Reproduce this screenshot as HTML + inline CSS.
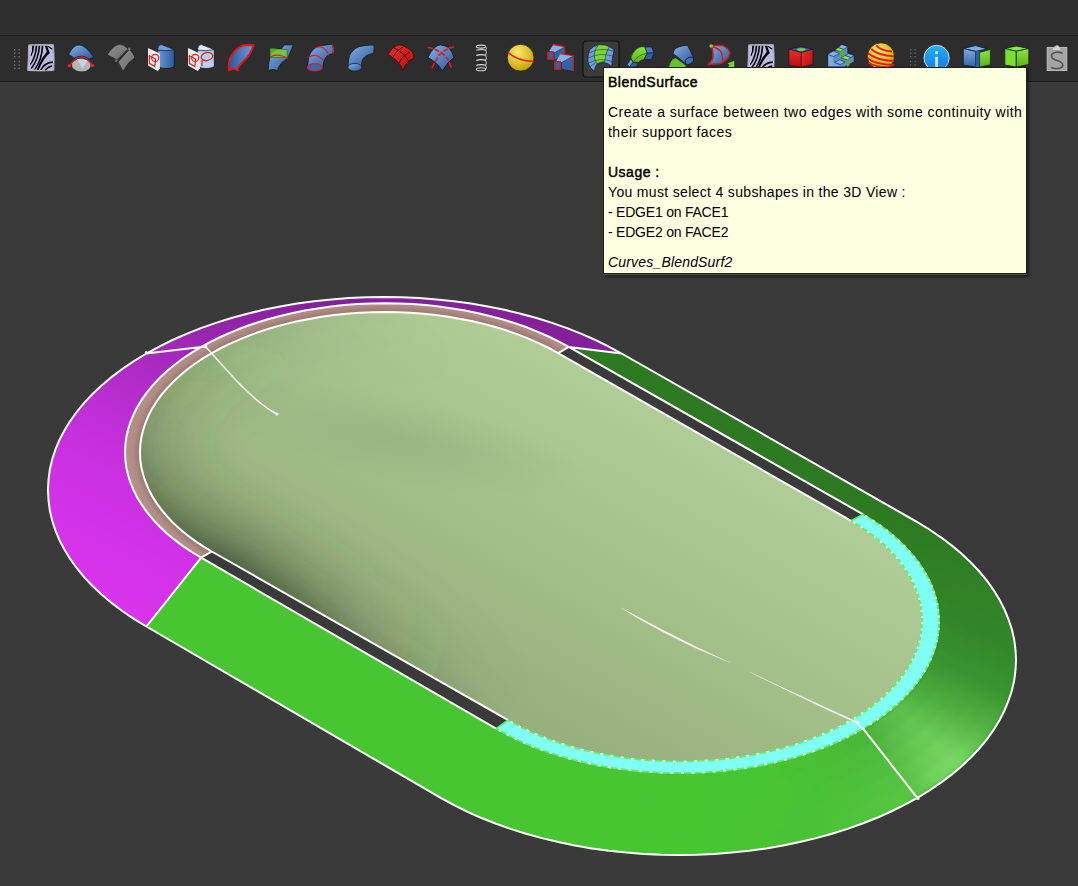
<!DOCTYPE html>
<html><head><meta charset="utf-8"><style>
html,body{margin:0;padding:0;}
body{width:1078px;height:886px;overflow:hidden;background:#3a3a3a;position:relative;font-family:"Liberation Sans",sans-serif;}
#top{position:absolute;left:0;top:0;width:1078px;height:35px;background:#2f2f2f;}
#tb{position:absolute;left:0;top:35px;width:1078px;height:47px;background:#2d2d2d;border-top:1px solid #1e1e1e;border-bottom:1px solid #1e1e1e;box-sizing:border-box;}
svg{position:absolute;left:0;top:0;}
#tip{position:absolute;left:603px;top:67px;width:424px;height:207px;box-sizing:border-box;background:#ffffe1;border:1px solid #1e1e1e;box-shadow:0 1px 0 #54544c,2px 3px 3px rgba(0,0,0,0.45);color:#000;font-size:14px;}
#tip div{position:absolute;left:4px;white-space:nowrap;line-height:17px;}
#tip .b{-webkit-text-stroke:0.45px #000;letter-spacing:0.5px;}
</style></head><body>
<div id="top"></div><div id="tb"></div>
<svg width="1078" height="886" viewBox="0 0 1078 886">
<defs>
 <linearGradient id="gmag" x1="300" y1="290" x2="130" y2="620" gradientUnits="userSpaceOnUse">
  <stop offset="0" stop-color="#84209a"/><stop offset="0.2" stop-color="#9426ac"/><stop offset="0.42" stop-color="#b22cc8"/><stop offset="0.62" stop-color="#c630de"/><stop offset="0.82" stop-color="#d232e8"/><stop offset="1" stop-color="#d834ec"/>
 </linearGradient>
 <radialGradient id="ghl" cx="915" cy="775" r="120" gradientUnits="userSpaceOnUse">
  <stop offset="0" stop-color="#74dc62"/><stop offset="1" stop-color="#74dc62" stop-opacity="0"/>
 </radialGradient>
 <linearGradient id="gdg" x1="900" y1="540" x2="900" y2="800" gradientUnits="userSpaceOnUse">
  <stop offset="0" stop-color="#2f7d23"/><stop offset="1" stop-color="#3fa02f"/>
 </linearGradient>
 <linearGradient id="gin" x1="700" y1="435" x2="528" y2="733" gradientUnits="userSpaceOnUse">
  <stop offset="0" stop-color="#b1cd97"/><stop offset="0.5" stop-color="#a4bf8a"/><stop offset="1" stop-color="#97ae7d"/>
 </linearGradient>
 <radialGradient id="rsh"><stop offset="0" stop-color="#3a4a2e" stop-opacity="0.75"/><stop offset="0.3" stop-color="#3a4a2e" stop-opacity="0.38"/><stop offset="0.65" stop-color="#3a4a2e" stop-opacity="0.1"/><stop offset="1" stop-color="#3a4a2e" stop-opacity="0"/></radialGradient>
 <radialGradient id="rsv" cx="225" cy="570" r="320" gradientUnits="userSpaceOnUse"><stop offset="0" stop-color="#34442a" stop-opacity="1"/><stop offset="0.25" stop-color="#34442a" stop-opacity="0.7"/><stop offset="0.5" stop-color="#34442a" stop-opacity="0.3"/><stop offset="0.75" stop-color="#34442a" stop-opacity="0.08"/><stop offset="1" stop-color="#34442a" stop-opacity="0"/></radialGradient>
 <radialGradient id="rsh2"><stop offset="0" stop-color="#4a5e3c" stop-opacity="0.2"/><stop offset="1" stop-color="#4a5e3c" stop-opacity="0"/></radialGradient>
 <radialGradient id="rsh3"><stop offset="0" stop-color="#6a8258" stop-opacity="0.18"/><stop offset="1" stop-color="#6a8258" stop-opacity="0"/></radialGradient>
 <filter id="blur3" x="-10%" y="-10%" width="120%" height="120%"><feGaussianBlur stdDeviation="2.5"/></filter>
 <filter id="blur22" x="-20%" y="-20%" width="140%" height="140%" filterUnits="objectBoundingBox"><feGaussianBlur stdDeviation="20"/></filter>
 <filter id="blur1" x="-5%" y="-5%" width="110%" height="110%"><feGaussianBlur stdDeviation="2.2"/></filter>
 <filter id="blur6" x="-20%" y="-20%" width="140%" height="140%"><feGaussianBlur stdDeviation="6"/></filter>
 <filter id="blur15" x="-50%" y="-50%" width="200%" height="200%"><feGaussianBlur stdDeviation="14"/></filter>
 <filter id="blur8" x="-50%" y="-50%" width="200%" height="200%"><feGaussianBlur stdDeviation="8"/></filter>
 <filter id="blur25" x="-50%" y="-50%" width="200%" height="200%"><feGaussianBlur stdDeviation="25"/></filter>
 <clipPath id="cin"><path d="M211.8,551.5L202.9,546.2L194.6,540.6L186.8,534.8L179.5,528.7L172.8,522.5L166.7,516.0L161.2,509.4L156.3,502.6L152.0,495.7L148.3,488.6L145.4,481.5L143.0,474.2L141.3,467.0L140.3,459.6L140.0,452.3L140.3,445.0L141.3,437.6L143.0,430.4L145.4,423.1L148.3,416.0L152.0,408.9L156.3,402.0L161.2,395.2L166.7,388.6L172.8,382.2L179.5,375.9L186.8,369.8L194.6,364.0L202.9,358.4L211.8,353.1L221.1,348.0L230.8,343.3L241.0,338.8L251.6,334.6L262.5,330.8L273.8,327.3L285.3,324.1L297.2,321.3L309.3,318.9L321.6,316.8L334.1,315.1L346.7,313.7L359.4,312.8L372.2,312.2L385.0,312.0L397.8,312.2L410.6,312.8L423.3,313.7L435.9,315.1L448.4,316.8L460.7,318.9L472.8,321.3L484.7,324.1L496.2,327.3L507.5,330.8L518.4,334.6L529.0,338.8L539.2,343.3L548.9,348.0L558.2,353.1L851.1,520.8L859.9,526.2L868.1,531.8L875.9,537.6L883.1,543.7L889.7,550.0L895.8,556.5L901.2,563.2L906.1,570.0L910.3,576.9L913.9,584.0L916.9,591.2L919.2,598.4L920.9,605.8L921.9,613.1L922.2,620.5L921.9,627.9L920.9,635.2L919.2,642.6L916.9,649.8L913.9,657.0L910.3,664.1L906.1,671.0L901.2,677.8L895.8,684.5L889.7,691.0L883.1,697.3L875.9,703.4L868.1,709.2L859.9,714.8L851.1,720.2L841.9,725.3L832.3,730.1L822.2,734.6L811.7,738.8L800.9,742.6L789.7,746.1L778.3,749.3L766.5,752.1L754.6,754.6L742.4,756.7L730.0,758.4L717.6,759.8L705.0,760.7L692.3,761.3L679.6,761.5L666.9,761.3L654.2,760.7L641.6,759.8L629.2,758.4L616.8,756.7L604.6,754.6L592.7,752.1L580.9,749.3L569.5,746.1L558.3,742.6L547.5,738.8L537.0,734.6L526.9,730.1L517.3,725.3L508.1,720.2Z"/></clipPath>
</defs>
<path d="M146.4,626.5L134.3,619.1L122.9,611.5L112.2,603.4L102.2,595.1L93.0,586.5L84.6,577.6L77.0,568.5L70.3,559.2L64.4,549.6L59.4,540.0L55.3,530.1L52.1,520.2L49.8,510.2L48.5,500.1L48.0,490.0L48.5,479.9L49.8,469.8L52.1,459.8L55.3,449.9L59.4,440.0L64.4,430.4L70.3,420.8L77.0,411.5L84.6,402.4L93.0,393.5L102.2,384.9L112.2,376.6L122.9,368.5L134.3,360.9L146.4,353.5L159.2,346.6L172.5,340.0L186.5,333.9L201.0,328.1L216.0,322.9L231.5,318.0L247.3,313.7L263.6,309.8L280.2,306.4L297.0,303.6L314.1,301.2L331.4,299.4L348.9,298.1L366.4,297.3L384.0,297.0L401.6,297.3L419.1,298.1L436.6,299.4L453.9,301.2L471.0,303.6L487.8,306.4L504.4,309.8L520.7,313.7L536.5,318.0L552.0,322.9L567.0,328.1L581.5,333.9L595.5,340.0L608.8,346.6L621.6,353.5L568.8,346.9L559.0,341.6L548.6,336.5L537.8,331.8L526.6,327.3L515.0,323.3L503.0,319.5L490.8,316.2L478.2,313.2L465.3,310.6L452.3,308.4L439.1,306.6L425.7,305.1L412.2,304.1L398.6,303.5L385.0,303.3L371.4,303.5L357.8,304.1L344.3,305.1L330.9,306.6L317.7,308.4L304.7,310.6L291.8,313.2L279.2,316.2L267.0,319.5L255.0,323.3L243.4,327.3L232.2,331.8L221.4,336.5L211.0,341.6L201.2,346.9L191.8,352.6L182.9,358.5L174.7,364.7L166.9,371.1L159.8,377.8L153.3,384.7L147.5,391.7L142.3,398.9L137.7,406.3L133.9,413.7L130.7,421.3L128.2,429.0L126.4,436.7L125.4,444.5L125.0,452.3L125.4,460.1L126.4,467.9L128.2,475.6L130.7,483.3L133.9,490.9L137.7,498.3L142.3,505.7L147.5,512.9L153.3,519.9L159.8,526.8L166.9,533.5L174.7,539.9L182.9,546.1L191.8,552.0L201.2,557.7Z" fill="url(#gmag)"/>
<path d="M621.6,353.5L917.3,522.1L929.4,529.5L940.9,537.3L951.6,545.4L961.6,553.8L970.9,562.5L979.3,571.5L986.9,580.7L993.6,590.1L999.5,599.7L1004.5,609.5L1008.6,619.5L1011.9,629.5L1014.2,639.6L1015.5,649.8L1016.0,660.0L1015.5,670.2L1014.2,680.4L1011.9,690.5L1008.6,700.5L1004.5,710.5L999.5,720.3L993.6,729.9L986.9,739.3L979.3,748.5L970.9,757.5L961.6,766.2L951.6,774.6L940.9,782.7L929.4,790.5L917.3,797.9L863.1,728.6L872.4,722.9L881.3,716.8L889.5,710.5L897.2,704.0L904.3,697.2L910.8,690.3L916.7,683.1L921.9,675.8L926.4,668.3L930.3,660.7L933.4,653.0L935.9,645.2L937.7,637.3L938.7,629.4L939.1,621.5L938.7,613.6L937.7,605.7L935.9,597.8L933.4,590.0L930.3,582.3L926.4,574.7L921.9,567.2L916.7,559.9L910.8,552.7L904.3,545.8L897.2,539.0L889.5,532.5L881.3,526.2L872.4,520.1L863.1,514.4L568.8,346.9Z" fill="#2e7a22"/>
<path d="M917.3,797.9L904.5,804.9L891.1,811.5L877.1,817.8L862.5,823.5L847.5,828.9L832.0,833.7L816.1,838.1L799.8,842.0L783.1,845.5L766.2,848.4L749.1,850.7L731.7,852.6L714.2,853.9L696.6,854.7L679.0,855.0L661.4,854.7L643.8,853.9L626.3,852.6L608.9,850.7L591.8,848.4L574.9,845.5L558.2,842.0L541.9,838.1L526.0,833.7L510.5,828.9L495.5,823.5L480.9,817.8L466.9,811.5L453.5,804.9L440.7,797.9L146.4,626.5L201.2,557.7L496.1,728.6L506.0,734.1L516.3,739.2L527.1,744.1L538.3,748.6L549.9,752.7L561.8,756.5L574.1,759.9L586.6,762.9L599.4,765.6L612.4,767.8L625.6,769.7L639.0,771.1L652.5,772.2L666.0,772.8L679.6,773.0L693.2,772.8L706.7,772.2L720.2,771.1L733.6,769.7L746.8,767.8L759.8,765.6L772.6,762.9L785.1,759.9L797.4,756.5L809.4,752.7L820.9,748.6L832.1,744.1L842.9,739.2L853.2,734.1L863.1,728.6Z" fill="#47c632"/>
<clipPath id="crr"><path d="M908.8,517.4L921.4,524.5L933.3,532.1L944.6,539.9L955.1,548.2L964.8,556.7L973.7,565.5L981.9,574.5L989.2,583.8L995.7,593.3L1001.3,603.0L1006.0,612.8L1009.8,622.8L1012.7,632.9L1014.7,643.0L1015.8,653.2L1015.9,663.4L1015.2,673.6L1013.5,683.8L1010.9,693.9L1007.4,703.9L1002.9,713.7L997.6,723.5L991.5,733.0L984.4,742.4L976.6,751.5L967.9,760.4L958.4,769.0L948.1,777.4L937.2,785.3L925.5,793.0L913.1,800.3L900.1,807.2L886.5,813.7L872.3,819.7L857.6,825.4L842.4,830.6L826.7,835.3L810.7,839.5L794.3,843.2L777.5,846.5L760.5,849.2L743.3,851.4L725.9,853.1L708.4,854.3L690.8,854.9L673.1,855.0L655.5,854.5L637.9,853.5L620.5,852.0L634.5,770.7L648.0,771.9L661.5,772.6L675.1,773.0L688.7,772.9L702.2,772.4L715.7,771.5L729.1,770.2L742.4,768.5L755.5,766.4L768.4,763.9L781.0,761.0L793.4,757.7L805.4,754.0L817.1,750.0L828.4,745.6L839.4,740.9L849.8,735.8L859.9,730.5L869.4,724.8L878.4,718.9L886.8,712.7L894.7,706.2L902.0,699.5L908.7,692.6L914.8,685.5L920.2,678.3L925.0,670.8L929.0,663.3L932.4,655.6L935.2,647.8L937.2,640.0L938.5,632.1L939.1,624.1L938.9,616.2L938.1,608.3L936.6,600.4L934.3,592.6L931.4,584.8L927.8,577.2L923.5,569.7L918.5,562.3L912.8,555.1L906.6,548.1L899.7,541.2L892.2,534.6L884.1,528.2L875.4,522.1L866.3,516.3L856.6,510.7Z"/></clipPath>
<g clip-path="url(#crr)"><g filter="url(#blur1)"><g><path d="M917.3,522.1L925.9,527.3L914.6,525.5L906.5,520.6Z" fill="#2e7a22" stroke="#2e7a22" stroke-width="0.7"/>
<path d="M923.5,525.8L931.8,531.0L920.3,529.1L912.3,524.1Z" fill="#2e7a22" stroke="#2e7a22" stroke-width="0.7"/>
<path d="M929.4,529.5L937.5,534.9L925.8,532.8L918.0,527.6Z" fill="#2e7b22" stroke="#2e7b22" stroke-width="0.7"/>
<path d="M935.3,533.4L943.1,538.9L931.1,536.6L923.6,531.3Z" fill="#2e7b23" stroke="#2e7b23" stroke-width="0.7"/>
<path d="M940.9,537.3L948.5,542.9L936.2,540.4L929.0,535.1Z" fill="#2e7b23" stroke="#2e7b23" stroke-width="0.7"/>
<path d="M946.4,541.3L953.7,547.0L941.2,544.4L934.2,538.9Z" fill="#2e7c23" stroke="#2e7c23" stroke-width="0.7"/>
<path d="M951.6,545.4L958.7,551.2L946.0,548.4L939.2,542.8Z" fill="#2e7c23" stroke="#2e7c23" stroke-width="0.7"/>
<path d="M956.7,549.6L963.5,555.5L950.6,552.5L944.1,546.8Z" fill="#2f7d24" stroke="#2f7d24" stroke-width="0.7"/>
<path d="M961.6,553.8L968.2,559.9L955.0,556.6L948.8,550.8Z" fill="#2f7d24" stroke="#2f7d24" stroke-width="0.7"/>
<path d="M966.3,558.1L972.6,564.3L959.2,560.8L953.2,555.0Z" fill="#2f7e24" stroke="#2f7e24" stroke-width="0.7"/>
<path d="M970.9,562.5L976.8,568.8L963.3,565.1L957.5,559.1Z" fill="#2f7e25" stroke="#2f7e25" stroke-width="0.7"/>
<path d="M975.2,567.0L980.9,573.3L967.1,569.5L961.7,563.4Z" fill="#2f7f25" stroke="#2f7f25" stroke-width="0.7"/>
<path d="M979.3,571.5L984.7,577.9L970.7,573.9L965.6,567.7Z" fill="#2f7f25" stroke="#2f7f25" stroke-width="0.7"/>
<path d="M983.2,576.1L988.3,582.6L974.2,578.3L969.3,572.1Z" fill="#2f7f26" stroke="#2f7f26" stroke-width="0.7"/>
<path d="M986.9,580.7L991.7,587.3L977.4,582.8L972.8,576.5Z" fill="#308026" stroke="#308026" stroke-width="0.7"/>
<path d="M990.3,585.4L994.9,592.0L980.5,587.4L976.1,581.0Z" fill="#308026" stroke="#308026" stroke-width="0.7"/>
<path d="M993.6,590.1L997.8,596.8L983.3,592.0L979.3,585.5Z" fill="#308126" stroke="#308126" stroke-width="0.7"/>
<path d="M996.7,594.9L1000.6,601.7L985.9,596.6L982.2,590.1Z" fill="#308127" stroke="#308127" stroke-width="0.7"/>
<path d="M999.5,599.7L1003.1,606.6L988.3,601.3L984.9,594.7Z" fill="#308227" stroke="#308227" stroke-width="0.7"/>
<path d="M1002.1,604.6L1005.4,611.5L990.5,606.0L987.4,599.4Z" fill="#308227" stroke="#308227" stroke-width="0.7"/>
<path d="M1004.5,609.5L1007.5,616.5L992.5,610.7L989.7,604.1Z" fill="#308328" stroke="#308328" stroke-width="0.7"/>
<path d="M1006.7,614.5L1009.4,621.5L994.3,615.5L991.7,608.8Z" fill="#318328" stroke="#318328" stroke-width="0.7"/>
<path d="M1008.6,619.5L1011.0,626.5L995.8,620.3L993.6,613.6Z" fill="#318328" stroke="#318328" stroke-width="0.7"/>
<path d="M1010.4,624.5L1012.4,631.5L997.2,625.1L995.2,618.3Z" fill="#318429" stroke="#318429" stroke-width="0.7"/>
<path d="M1011.9,629.5L1013.6,636.6L998.3,629.9L996.7,623.2Z" fill="#318429" stroke="#318429" stroke-width="0.7"/>
<path d="M1013.1,634.5L1014.5,641.6L999.2,634.8L997.9,628.0Z" fill="#318529" stroke="#318529" stroke-width="0.7"/>
<path d="M1014.2,639.6L1015.2,646.7L999.9,639.6L998.9,632.8Z" fill="#318529" stroke="#318529" stroke-width="0.7"/>
<path d="M1015.0,644.7L1015.7,651.8L1000.3,644.5L999.6,637.7Z" fill="#32872a" stroke="#32872a" stroke-width="0.7"/>
<path d="M1015.5,649.8L1016.0,656.9L1000.6,649.4L1000.2,642.5Z" fill="#33882b" stroke="#33882b" stroke-width="0.7"/>
<path d="M1015.9,654.9L1016.0,662.0L1000.6,654.3L1000.5,647.4Z" fill="#33892b" stroke="#33892b" stroke-width="0.7"/>
<path d="M1016.0,660.0L1015.8,667.1L1000.4,659.1L1000.6,652.3Z" fill="#348b2c" stroke="#348b2c" stroke-width="0.7"/>
<path d="M1015.9,665.1L1015.3,672.2L1000.0,664.0L1000.5,657.2Z" fill="#358c2c" stroke="#358c2c" stroke-width="0.7"/>
<path d="M1015.5,670.2L1014.7,677.3L999.3,668.9L1000.2,662.1Z" fill="#368e2d" stroke="#368e2d" stroke-width="0.7"/>
<path d="M1015.0,675.3L1013.8,682.4L998.5,673.7L999.6,666.9Z" fill="#368f2d" stroke="#368f2d" stroke-width="0.7"/>
<path d="M1014.2,680.4L1012.6,687.5L997.4,678.5L998.9,671.8Z" fill="#37912e" stroke="#37912e" stroke-width="0.7"/>
<path d="M1013.1,685.5L1011.3,692.5L996.1,683.4L997.9,676.6Z" fill="#38922e" stroke="#38922e" stroke-width="0.7"/>
<path d="M1011.9,690.5L1009.7,697.5L994.6,688.2L996.7,681.4Z" fill="#39942f" stroke="#39942f" stroke-width="0.7"/>
<path d="M1010.4,695.5L1007.9,702.5L992.9,692.9L995.2,686.3Z" fill="#3a9630" stroke="#3a9630" stroke-width="0.7"/>
<path d="M1008.6,700.5L1005.8,707.5L990.9,697.7L993.6,691.0Z" fill="#3d9a33" stroke="#3d9a33" stroke-width="0.7"/>
<path d="M1006.7,705.5L1003.6,712.4L988.8,702.4L991.7,695.8Z" fill="#419e35" stroke="#419e35" stroke-width="0.7"/>
<path d="M1004.5,710.5L1001.1,717.3L986.4,707.1L989.7,700.5Z" fill="#44a238" stroke="#44a238" stroke-width="0.7"/>
<path d="M1002.1,715.4L998.4,722.2L983.8,711.7L987.4,705.2Z" fill="#48a63b" stroke="#48a63b" stroke-width="0.7"/>
<path d="M999.5,720.3L995.5,727.0L981.0,716.3L984.9,709.9Z" fill="#4caa3e" stroke="#4caa3e" stroke-width="0.7"/>
<path d="M996.7,725.1L992.3,731.8L978.0,720.9L982.2,714.5Z" fill="#4fae41" stroke="#4fae41" stroke-width="0.7"/>
<path d="M993.6,729.9L989.0,736.5L974.8,725.4L979.3,719.1Z" fill="#53b244" stroke="#53b244" stroke-width="0.7"/>
<path d="M990.3,734.6L985.4,741.2L971.4,729.9L976.1,723.6Z" fill="#56b747" stroke="#56b747" stroke-width="0.7"/>
<path d="M986.9,739.3L981.6,745.8L967.8,734.3L972.8,728.1Z" fill="#5cbc4b" stroke="#5cbc4b" stroke-width="0.7"/>
<path d="M983.2,743.9L977.7,750.3L964.0,738.6L969.3,732.5Z" fill="#61c150" stroke="#61c150" stroke-width="0.7"/>
<path d="M979.3,748.5L973.5,754.8L960.0,742.9L965.6,736.9Z" fill="#66c654" stroke="#66c654" stroke-width="0.7"/>
<path d="M975.2,753.0L969.1,759.3L955.8,747.1L961.7,741.2Z" fill="#6bcb59" stroke="#6bcb59" stroke-width="0.7"/>
<path d="M970.9,757.5L964.5,763.6L951.5,751.3L957.5,745.4Z" fill="#70d05d" stroke="#70d05d" stroke-width="0.7"/>
<path d="M966.3,761.9L959.7,767.9L946.9,755.4L953.2,749.6Z" fill="#75d662" stroke="#75d662" stroke-width="0.7"/>
<path d="M961.6,766.2L954.7,772.1L942.2,759.4L948.8,753.8Z" fill="#77d864" stroke="#77d864" stroke-width="0.7"/>
<path d="M956.7,770.4L949.5,776.3L937.2,763.4L944.1,757.8Z" fill="#75d662" stroke="#75d662" stroke-width="0.7"/>
<path d="M951.6,774.6L944.2,780.3L932.1,767.3L939.2,761.8Z" fill="#73d560" stroke="#73d560" stroke-width="0.7"/>
<path d="M946.4,778.7L938.7,784.3L926.8,771.1L934.2,765.7Z" fill="#71d35e" stroke="#71d35e" stroke-width="0.7"/>
<path d="M940.9,782.7L933.0,788.2L921.4,774.8L929.0,769.5Z" fill="#6ed15a" stroke="#6ed15a" stroke-width="0.7"/>
<path d="M935.3,786.6L927.1,792.0L915.8,778.4L923.6,773.3Z" fill="#69cd56" stroke="#69cd56" stroke-width="0.7"/>
<path d="M929.4,790.5L921.0,795.7L910.0,781.9L918.0,777.0Z" fill="#63c951" stroke="#63c951" stroke-width="0.7"/>
<path d="M923.5,794.2L914.8,799.3L904.1,785.4L912.3,780.5Z" fill="#5ec54c" stroke="#5ec54c" stroke-width="0.7"/>
<path d="M917.3,797.9L908.3,802.9L897.9,788.8L906.5,784.0Z" fill="#57c644" stroke="#57c644" stroke-width="0.7"/>
<path d="M910.9,801.5L901.7,806.3L891.6,792.1L900.4,787.5Z" fill="#56c543" stroke="#56c543" stroke-width="0.7"/>
<path d="M904.4,805.0L895.0,809.7L885.2,795.3L894.1,790.8Z" fill="#55c542" stroke="#55c542" stroke-width="0.7"/>
<path d="M897.7,808.4L888.0,812.9L878.6,798.4L887.7,794.1Z" fill="#54c541" stroke="#54c541" stroke-width="0.7"/>
<path d="M890.8,811.7L881.0,816.1L871.8,801.4L881.2,797.2Z" fill="#53c53f" stroke="#53c53f" stroke-width="0.7"/>
<path d="M883.8,814.9L873.8,819.1L864.9,804.3L874.5,800.3Z" fill="#52c43e" stroke="#52c43e" stroke-width="0.7"/>
<path d="M876.7,817.9L866.4,822.1L857.9,807.1L867.7,803.2Z" fill="#51c43d" stroke="#51c43d" stroke-width="0.7"/>
<path d="M869.4,820.9L859.0,824.9L850.8,809.8L860.7,806.0Z" fill="#50c43c" stroke="#50c43c" stroke-width="0.7"/>
<path d="M861.9,823.8L851.4,827.6L843.6,812.4L853.7,808.8Z" fill="#4fc33b" stroke="#4fc33b" stroke-width="0.7"/>
<path d="M854.4,826.5L843.7,830.1L836.2,814.8L846.5,811.4Z" fill="#4ec33a" stroke="#4ec33a" stroke-width="0.7"/>
<path d="M846.7,829.1L835.8,832.6L828.7,817.2L839.1,813.9Z" fill="#4ec338" stroke="#4ec338" stroke-width="0.7"/>
<path d="M838.9,831.6L827.9,834.9L821.2,819.4L831.7,816.3Z" fill="#4dc237" stroke="#4dc237" stroke-width="0.7"/>
<path d="M831.0,834.0L819.8,837.2L813.5,821.6L824.2,818.6Z" fill="#4cc236" stroke="#4cc236" stroke-width="0.7"/>
<path d="M823.0,836.3L811.7,839.2L805.7,823.6L816.5,820.7Z" fill="#4bc235" stroke="#4bc235" stroke-width="0.7"/>
<path d="M814.9,838.4L803.5,841.2L797.9,825.4L808.8,822.8Z" fill="#4bc235" stroke="#4bc235" stroke-width="0.7"/>
<path d="M806.7,840.5L795.1,843.1L789.9,827.2L801.0,824.7Z" fill="#4ac235" stroke="#4ac235" stroke-width="0.7"/>
<path d="M798.4,842.3L786.7,844.8L781.9,828.8L793.1,826.5Z" fill="#4ac334" stroke="#4ac334" stroke-width="0.7"/>
<path d="M790.1,844.1L778.2,846.4L773.8,830.3L785.1,828.2Z" fill="#4ac334" stroke="#4ac334" stroke-width="0.7"/>
<path d="M781.6,845.7L769.7,847.8L765.6,831.7L777.0,829.8Z" fill="#49c334" stroke="#49c334" stroke-width="0.7"/>
<path d="M773.1,847.2L761.1,849.1L757.4,833.0L768.9,831.2Z" fill="#49c433" stroke="#49c433" stroke-width="0.7"/>
<path d="M764.5,848.6L752.4,850.3L749.2,834.1L760.7,832.5Z" fill="#49c433" stroke="#49c433" stroke-width="0.7"/>
<path d="M755.9,849.9L743.7,851.4L740.8,835.1L752.4,833.7Z" fill="#48c433" stroke="#48c433" stroke-width="0.7"/>
<path d="M747.1,851.0L734.9,852.3L732.5,836.0L744.1,834.8Z" fill="#48c433" stroke="#48c433" stroke-width="0.7"/>
<path d="M738.4,851.9L726.1,853.1L724.1,836.8L735.8,835.7Z" fill="#47c532" stroke="#47c532" stroke-width="0.7"/>
<path d="M729.6,852.8L717.3,853.7L715.6,837.4L727.4,836.5Z" fill="#47c532" stroke="#47c532" stroke-width="0.7"/>
<path d="M720.8,853.5L708.4,854.3L707.2,837.9L719.0,837.2Z" fill="#47c532" stroke="#47c532" stroke-width="0.7"/>
<path d="M711.9,854.1L699.5,854.6L698.7,838.3L710.5,837.7Z" fill="#47c632" stroke="#47c632" stroke-width="0.7"/>
<path d="M703.0,854.5L690.6,854.9L690.2,838.5L702.1,838.1Z" fill="#47c632" stroke="#47c632" stroke-width="0.7"/>
<path d="M694.1,854.8L681.7,855.0L681.7,838.6L693.6,838.4Z" fill="#47c632" stroke="#47c632" stroke-width="0.7"/>
<path d="M685.2,855.0L672.8,855.0L673.2,838.6L685.1,838.6Z" fill="#47c632" stroke="#47c632" stroke-width="0.7"/>
<path d="M676.3,855.0L663.9,854.8L664.7,838.4L676.6,838.6Z" fill="#47c632" stroke="#47c632" stroke-width="0.7"/>
<path d="M667.4,854.9L655.0,854.5L656.2,838.1L668.1,838.5Z" fill="#47c632" stroke="#47c632" stroke-width="0.7"/>
<path d="M658.5,854.6L646.1,854.1L647.7,837.7L659.6,838.3Z" fill="#47c632" stroke="#47c632" stroke-width="0.7"/>
<path d="M906.5,520.6L914.6,525.5L903.4,523.7L895.6,519.0Z" fill="#2e7a22" stroke="#2e7a22" stroke-width="0.7"/>
<path d="M912.3,524.1L920.3,529.1L908.8,527.2L901.2,522.3Z" fill="#2e7a22" stroke="#2e7a22" stroke-width="0.7"/>
<path d="M918.0,527.6L925.8,532.8L914.0,530.7L906.6,525.8Z" fill="#2e7b22" stroke="#2e7b22" stroke-width="0.7"/>
<path d="M923.6,531.3L931.1,536.6L919.1,534.3L911.9,529.3Z" fill="#2e7b23" stroke="#2e7b23" stroke-width="0.7"/>
<path d="M929.0,535.1L936.2,540.4L923.9,538.0L917.0,532.8Z" fill="#2e7b23" stroke="#2e7b23" stroke-width="0.7"/>
<path d="M934.2,538.9L941.2,544.4L928.7,541.7L922.0,536.5Z" fill="#2e7c23" stroke="#2e7c23" stroke-width="0.7"/>
<path d="M939.2,542.8L946.0,548.4L933.2,545.5L926.8,540.2Z" fill="#2e7c23" stroke="#2e7c23" stroke-width="0.7"/>
<path d="M944.1,546.8L950.6,552.5L937.6,549.4L931.4,544.0Z" fill="#2f7d24" stroke="#2f7d24" stroke-width="0.7"/>
<path d="M948.8,550.8L955.0,556.6L941.8,553.4L935.9,547.9Z" fill="#2f7d24" stroke="#2f7d24" stroke-width="0.7"/>
<path d="M953.2,555.0L959.2,560.8L945.8,557.4L940.1,551.8Z" fill="#2f7e24" stroke="#2f7e24" stroke-width="0.7"/>
<path d="M957.5,559.1L963.3,565.1L949.7,561.5L944.2,555.8Z" fill="#2f7e25" stroke="#2f7e25" stroke-width="0.7"/>
<path d="M961.7,563.4L967.1,569.5L953.3,565.6L948.2,559.9Z" fill="#2f7e25" stroke="#2f7e25" stroke-width="0.7"/>
<path d="M965.6,567.7L970.7,573.9L956.8,569.8L951.9,564.0Z" fill="#2f7f25" stroke="#2f7f25" stroke-width="0.7"/>
<path d="M969.3,572.1L974.2,578.3L960.1,574.1L955.4,568.1Z" fill="#2f7f26" stroke="#2f7f26" stroke-width="0.7"/>
<path d="M972.8,576.5L977.4,582.8L963.2,578.4L958.8,572.4Z" fill="#308026" stroke="#308026" stroke-width="0.7"/>
<path d="M976.1,581.0L980.5,587.4L966.0,582.7L961.9,576.6Z" fill="#308026" stroke="#308026" stroke-width="0.7"/>
<path d="M979.3,585.5L983.3,592.0L968.7,587.1L964.9,581.0Z" fill="#308126" stroke="#308126" stroke-width="0.7"/>
<path d="M982.2,590.1L985.9,596.6L971.2,591.5L967.7,585.3Z" fill="#308127" stroke="#308127" stroke-width="0.7"/>
<path d="M984.9,594.7L988.3,601.3L973.5,595.9L970.3,589.7Z" fill="#308127" stroke="#308127" stroke-width="0.7"/>
<path d="M987.4,599.4L990.5,606.0L975.6,600.4L972.6,594.2Z" fill="#308227" stroke="#308227" stroke-width="0.7"/>
<path d="M989.7,604.1L992.5,610.7L977.5,605.0L974.8,598.6Z" fill="#308228" stroke="#308228" stroke-width="0.7"/>
<path d="M991.7,608.8L994.3,615.5L979.2,609.5L976.8,603.1Z" fill="#308328" stroke="#308328" stroke-width="0.7"/>
<path d="M993.6,613.6L995.8,620.3L980.7,614.1L978.6,607.7Z" fill="#318328" stroke="#318328" stroke-width="0.7"/>
<path d="M995.2,618.3L997.2,625.1L982.0,618.7L980.1,612.2Z" fill="#318429" stroke="#318429" stroke-width="0.7"/>
<path d="M996.7,623.2L998.3,629.9L983.0,623.3L981.5,616.8Z" fill="#318429" stroke="#318429" stroke-width="0.7"/>
<path d="M997.9,628.0L999.2,634.8L983.9,627.9L982.6,621.4Z" fill="#318429" stroke="#318429" stroke-width="0.7"/>
<path d="M998.9,632.8L999.9,639.6L984.5,632.5L983.6,626.0Z" fill="#318529" stroke="#318529" stroke-width="0.7"/>
<path d="M999.6,637.7L1000.3,644.5L985.0,637.2L984.3,630.7Z" fill="#32862a" stroke="#32862a" stroke-width="0.7"/>
<path d="M1000.2,642.5L1000.6,649.4L985.2,641.8L984.8,635.3Z" fill="#32872a" stroke="#32872a" stroke-width="0.7"/>
<path d="M1000.5,647.4L1000.6,654.3L985.2,646.5L985.1,640.0Z" fill="#33892b" stroke="#33892b" stroke-width="0.7"/>
<path d="M1000.6,652.3L1000.4,659.1L985.0,651.1L985.2,644.6Z" fill="#348a2c" stroke="#348a2c" stroke-width="0.7"/>
<path d="M1000.5,657.2L1000.0,664.0L984.6,655.8L985.1,649.2Z" fill="#358c2c" stroke="#358c2c" stroke-width="0.7"/>
<path d="M1000.2,662.1L999.3,668.9L984.0,660.4L984.8,653.9Z" fill="#358d2d" stroke="#358d2d" stroke-width="0.7"/>
<path d="M999.6,666.9L998.5,673.7L983.2,665.0L984.3,658.5Z" fill="#368e2d" stroke="#368e2d" stroke-width="0.7"/>
<path d="M998.9,671.8L997.4,678.5L982.2,669.6L983.6,663.2Z" fill="#37902e" stroke="#37902e" stroke-width="0.7"/>
<path d="M997.9,676.6L996.1,683.4L981.0,674.2L982.6,667.8Z" fill="#37912e" stroke="#37912e" stroke-width="0.7"/>
<path d="M996.7,681.4L994.6,688.2L979.5,678.8L981.5,672.4Z" fill="#38932f" stroke="#38932f" stroke-width="0.7"/>
<path d="M995.2,686.3L992.9,692.9L977.9,683.3L980.1,677.0Z" fill="#399430" stroke="#399430" stroke-width="0.7"/>
<path d="M993.6,691.0L990.9,697.7L976.0,687.9L978.6,681.5Z" fill="#3c9832" stroke="#3c9832" stroke-width="0.7"/>
<path d="M991.7,695.8L988.8,702.4L974.0,692.4L976.8,686.1Z" fill="#3f9b34" stroke="#3f9b34" stroke-width="0.7"/>
<path d="M989.7,700.5L986.4,707.1L971.7,696.8L974.8,690.6Z" fill="#429f37" stroke="#429f37" stroke-width="0.7"/>
<path d="M987.4,705.2L983.8,711.7L969.3,701.2L972.6,695.0Z" fill="#46a339" stroke="#46a339" stroke-width="0.7"/>
<path d="M984.9,709.9L981.0,716.3L966.6,705.6L970.3,699.5Z" fill="#49a73c" stroke="#49a73c" stroke-width="0.7"/>
<path d="M982.2,714.5L978.0,720.9L963.8,710.0L967.7,703.9Z" fill="#4cab3e" stroke="#4cab3e" stroke-width="0.7"/>
<path d="M979.3,719.1L974.8,725.4L960.7,714.3L964.9,708.2Z" fill="#4faf41" stroke="#4faf41" stroke-width="0.7"/>
<path d="M976.1,723.6L971.4,729.9L957.5,718.5L961.9,712.6Z" fill="#53b343" stroke="#53b343" stroke-width="0.7"/>
<path d="M972.8,728.1L967.8,734.3L954.0,722.7L958.8,716.8Z" fill="#57b847" stroke="#57b847" stroke-width="0.7"/>
<path d="M969.3,732.5L964.0,738.6L950.4,726.9L955.4,721.1Z" fill="#5cbc4b" stroke="#5cbc4b" stroke-width="0.7"/>
<path d="M965.6,736.9L960.0,742.9L946.6,731.0L951.9,725.2Z" fill="#61c14f" stroke="#61c14f" stroke-width="0.7"/>
<path d="M961.7,741.2L955.8,747.1L942.6,735.0L948.2,729.3Z" fill="#65c654" stroke="#65c654" stroke-width="0.7"/>
<path d="M957.5,745.4L951.5,751.3L938.5,739.0L944.2,733.4Z" fill="#6acb58" stroke="#6acb58" stroke-width="0.7"/>
<path d="M953.2,749.6L946.9,755.4L934.1,742.9L940.1,737.4Z" fill="#6fcf5c" stroke="#6fcf5c" stroke-width="0.7"/>
<path d="M948.8,753.8L942.2,759.4L929.6,746.7L935.9,741.3Z" fill="#71d25e" stroke="#71d25e" stroke-width="0.7"/>
<path d="M944.1,757.8L937.2,763.4L924.9,750.5L931.4,745.2Z" fill="#6fd05c" stroke="#6fd05c" stroke-width="0.7"/>
<path d="M939.2,761.8L932.1,767.3L920.0,754.2L926.8,749.0Z" fill="#6dcf5a" stroke="#6dcf5a" stroke-width="0.7"/>
<path d="M934.2,765.7L926.8,771.1L915.0,757.8L922.0,752.7Z" fill="#6bcd58" stroke="#6bcd58" stroke-width="0.7"/>
<path d="M929.0,769.5L921.4,774.8L909.8,761.3L917.0,756.4Z" fill="#68cb55" stroke="#68cb55" stroke-width="0.7"/>
<path d="M923.6,773.3L915.8,778.4L904.5,764.8L911.9,759.9Z" fill="#64c751" stroke="#64c751" stroke-width="0.7"/>
<path d="M918.0,777.0L910.0,781.9L899.0,768.2L906.6,763.4Z" fill="#5fc44d" stroke="#5fc44d" stroke-width="0.7"/>
<path d="M912.3,780.5L904.1,785.4L893.3,771.5L901.2,766.9Z" fill="#5ac149" stroke="#5ac149" stroke-width="0.7"/>
<path d="M906.5,784.0L897.9,788.8L887.5,774.7L895.6,770.2Z" fill="#54c241" stroke="#54c241" stroke-width="0.7"/>
<path d="M900.4,787.5L891.6,792.1L881.5,777.9L889.8,773.5Z" fill="#53c240" stroke="#53c240" stroke-width="0.7"/>
<path d="M894.1,790.8L885.2,795.3L875.3,780.9L883.9,776.6Z" fill="#52c23f" stroke="#52c23f" stroke-width="0.7"/>
<path d="M887.7,794.1L878.6,798.4L869.1,783.9L877.8,779.7Z" fill="#52c23e" stroke="#52c23e" stroke-width="0.7"/>
<path d="M881.2,797.2L871.8,801.4L862.6,786.8L871.6,782.7Z" fill="#51c23e" stroke="#51c23e" stroke-width="0.7"/>
<path d="M874.5,800.3L864.9,804.3L856.1,789.5L865.2,785.6Z" fill="#50c23d" stroke="#50c23d" stroke-width="0.7"/>
<path d="M867.7,803.2L857.9,807.1L849.4,792.2L858.7,788.4Z" fill="#4fc23b" stroke="#4fc23b" stroke-width="0.7"/>
<path d="M860.7,806.0L850.8,809.8L842.7,794.8L852.1,791.2Z" fill="#4ec23a" stroke="#4ec23a" stroke-width="0.7"/>
<path d="M853.7,808.8L843.6,812.4L835.8,797.2L845.4,793.8Z" fill="#4ec239" stroke="#4ec239" stroke-width="0.7"/>
<path d="M846.5,811.4L836.2,814.8L828.8,799.6L838.5,796.2Z" fill="#4dc238" stroke="#4dc238" stroke-width="0.7"/>
<path d="M839.1,813.9L828.7,817.2L821.6,801.8L831.5,798.6Z" fill="#4cc237" stroke="#4cc237" stroke-width="0.7"/>
<path d="M831.7,816.3L821.2,819.4L814.4,803.9L824.5,800.9Z" fill="#4bc236" stroke="#4bc236" stroke-width="0.7"/>
<path d="M824.2,818.6L813.5,821.6L807.1,805.9L817.3,803.1Z" fill="#4bc235" stroke="#4bc235" stroke-width="0.7"/>
<path d="M816.5,820.7L805.7,823.6L799.7,807.9L810.0,805.2Z" fill="#4ac235" stroke="#4ac235" stroke-width="0.7"/>
<path d="M808.8,822.8L797.9,825.4L792.2,809.6L802.7,807.1Z" fill="#4ac234" stroke="#4ac234" stroke-width="0.7"/>
<path d="M801.0,824.7L789.9,827.2L784.7,811.3L795.2,808.9Z" fill="#49c334" stroke="#49c334" stroke-width="0.7"/>
<path d="M793.1,826.5L781.9,828.8L777.1,812.9L787.7,810.7Z" fill="#49c334" stroke="#49c334" stroke-width="0.7"/>
<path d="M785.1,828.2L773.8,830.3L769.4,814.3L780.1,812.3Z" fill="#49c433" stroke="#49c433" stroke-width="0.7"/>
<path d="M777.0,829.8L765.6,831.7L761.6,815.6L772.4,813.8Z" fill="#49c433" stroke="#49c433" stroke-width="0.7"/>
<path d="M768.9,831.2L757.4,833.0L753.8,816.9L764.7,815.1Z" fill="#48c433" stroke="#48c433" stroke-width="0.7"/>
<path d="M760.7,832.5L749.2,834.1L745.9,817.9L756.9,816.4Z" fill="#48c433" stroke="#48c433" stroke-width="0.7"/>
<path d="M752.4,833.7L740.8,835.1L738.0,818.9L749.0,817.5Z" fill="#48c433" stroke="#48c433" stroke-width="0.7"/>
<path d="M744.1,834.8L732.5,836.0L730.0,819.7L741.1,818.5Z" fill="#48c532" stroke="#48c532" stroke-width="0.7"/>
<path d="M735.8,835.7L724.1,836.8L722.0,820.5L733.2,819.4Z" fill="#47c532" stroke="#47c532" stroke-width="0.7"/>
<path d="M727.4,836.5L715.6,837.4L714.0,821.1L725.2,820.2Z" fill="#47c532" stroke="#47c532" stroke-width="0.7"/>
<path d="M719.0,837.2L707.2,837.9L705.9,821.5L717.2,820.8Z" fill="#47c532" stroke="#47c532" stroke-width="0.7"/>
<path d="M710.5,837.7L698.7,838.3L697.9,821.9L709.1,821.4Z" fill="#47c632" stroke="#47c632" stroke-width="0.7"/>
<path d="M702.1,838.1L690.2,838.5L689.8,822.1L701.1,821.7Z" fill="#47c632" stroke="#47c632" stroke-width="0.7"/>
<path d="M693.6,838.4L681.7,838.6L681.7,822.2L693.0,822.0Z" fill="#47c632" stroke="#47c632" stroke-width="0.7"/>
<path d="M685.1,838.6L673.2,838.6L673.6,822.2L684.9,822.2Z" fill="#47c632" stroke="#47c632" stroke-width="0.7"/>
<path d="M676.6,838.6L664.7,838.4L665.5,822.0L676.8,822.2Z" fill="#47c632" stroke="#47c632" stroke-width="0.7"/>
<path d="M668.1,838.5L656.2,838.1L657.4,821.7L668.7,822.1Z" fill="#47c632" stroke="#47c632" stroke-width="0.7"/>
<path d="M659.6,838.3L647.7,837.7L649.4,821.4L660.6,821.9Z" fill="#47c632" stroke="#47c632" stroke-width="0.7"/>
<path d="M895.6,519.0L903.4,523.7L892.2,521.9L884.8,517.5Z" fill="#2e7a22" stroke="#2e7a22" stroke-width="0.7"/>
<path d="M901.2,522.3L908.8,527.2L897.3,525.2L890.1,520.6Z" fill="#2e7a22" stroke="#2e7a22" stroke-width="0.7"/>
<path d="M906.6,525.8L914.0,530.7L902.2,528.6L895.2,523.9Z" fill="#2e7b22" stroke="#2e7b22" stroke-width="0.7"/>
<path d="M911.9,529.3L919.1,534.3L907.0,532.0L900.3,527.2Z" fill="#2e7b23" stroke="#2e7b23" stroke-width="0.7"/>
<path d="M917.0,532.8L923.9,538.0L911.7,535.5L905.1,530.6Z" fill="#2e7b23" stroke="#2e7b23" stroke-width="0.7"/>
<path d="M922.0,536.5L928.7,541.7L916.2,539.1L909.8,534.1Z" fill="#2e7c23" stroke="#2e7c23" stroke-width="0.7"/>
<path d="M926.8,540.2L933.2,545.5L920.5,542.7L914.4,537.6Z" fill="#2e7c23" stroke="#2e7c23" stroke-width="0.7"/>
<path d="M931.4,544.0L937.6,549.4L924.6,546.4L918.8,541.2Z" fill="#2e7d24" stroke="#2e7d24" stroke-width="0.7"/>
<path d="M935.9,547.9L941.8,553.4L928.6,550.2L923.0,544.9Z" fill="#2f7d24" stroke="#2f7d24" stroke-width="0.7"/>
<path d="M940.1,551.8L945.8,557.4L932.4,554.0L927.1,548.6Z" fill="#2f7d24" stroke="#2f7d24" stroke-width="0.7"/>
<path d="M944.2,555.8L949.7,561.5L936.1,557.9L930.9,552.5Z" fill="#2f7e25" stroke="#2f7e25" stroke-width="0.7"/>
<path d="M948.2,559.9L953.3,565.6L939.6,561.8L934.7,556.3Z" fill="#2f7e25" stroke="#2f7e25" stroke-width="0.7"/>
<path d="M951.9,564.0L956.8,569.8L942.9,565.8L938.2,560.2Z" fill="#2f7f25" stroke="#2f7f25" stroke-width="0.7"/>
<path d="M955.4,568.1L960.1,574.1L946.0,569.8L941.6,564.2Z" fill="#2f7f26" stroke="#2f7f26" stroke-width="0.7"/>
<path d="M958.8,572.4L963.2,578.4L948.9,573.9L944.7,568.2Z" fill="#2f7f26" stroke="#2f7f26" stroke-width="0.7"/>
<path d="M961.9,576.6L966.0,582.7L951.6,578.0L947.7,572.3Z" fill="#308026" stroke="#308026" stroke-width="0.7"/>
<path d="M964.9,581.0L968.7,587.1L954.2,582.2L950.6,576.4Z" fill="#308026" stroke="#308026" stroke-width="0.7"/>
<path d="M967.7,585.3L971.2,591.5L956.6,586.4L953.2,580.5Z" fill="#308127" stroke="#308127" stroke-width="0.7"/>
<path d="M970.3,589.7L973.5,595.9L958.7,590.6L955.6,584.7Z" fill="#308127" stroke="#308127" stroke-width="0.7"/>
<path d="M972.6,594.2L975.6,600.4L960.7,594.9L957.9,588.9Z" fill="#308227" stroke="#308227" stroke-width="0.7"/>
<path d="M974.8,598.6L977.5,605.0L962.5,599.2L960.0,593.2Z" fill="#308228" stroke="#308228" stroke-width="0.7"/>
<path d="M976.8,603.1L979.2,609.5L964.1,603.5L961.8,597.5Z" fill="#308228" stroke="#308228" stroke-width="0.7"/>
<path d="M978.6,607.7L980.7,614.1L965.5,607.9L963.5,601.8Z" fill="#308328" stroke="#308328" stroke-width="0.7"/>
<path d="M980.1,612.2L982.0,618.7L966.7,612.2L965.0,606.1Z" fill="#318329" stroke="#318329" stroke-width="0.7"/>
<path d="M981.5,616.8L983.0,623.3L967.8,616.6L966.3,610.5Z" fill="#318429" stroke="#318429" stroke-width="0.7"/>
<path d="M982.6,621.4L983.9,627.9L968.6,621.0L967.4,614.9Z" fill="#318429" stroke="#318429" stroke-width="0.7"/>
<path d="M983.6,626.0L984.5,632.5L969.2,625.4L968.3,619.2Z" fill="#318429" stroke="#318429" stroke-width="0.7"/>
<path d="M984.3,630.7L985.0,637.2L969.6,629.8L969.0,623.6Z" fill="#32862a" stroke="#32862a" stroke-width="0.7"/>
<path d="M984.8,635.3L985.2,641.8L969.8,634.2L969.5,628.1Z" fill="#32872a" stroke="#32872a" stroke-width="0.7"/>
<path d="M985.1,640.0L985.2,646.5L969.8,638.7L969.8,632.5Z" fill="#33882b" stroke="#33882b" stroke-width="0.7"/>
<path d="M985.2,644.6L985.0,651.1L969.7,643.1L969.9,636.9Z" fill="#348a2c" stroke="#348a2c" stroke-width="0.7"/>
<path d="M985.1,649.2L984.6,655.8L969.3,647.5L969.8,641.3Z" fill="#348b2c" stroke="#348b2c" stroke-width="0.7"/>
<path d="M984.8,653.9L984.0,660.4L968.7,651.9L969.5,645.7Z" fill="#358c2d" stroke="#358c2d" stroke-width="0.7"/>
<path d="M984.3,658.5L983.2,665.0L967.9,656.3L969.0,650.2Z" fill="#368e2d" stroke="#368e2d" stroke-width="0.7"/>
<path d="M983.6,663.2L982.2,669.6L967.0,660.7L968.3,654.6Z" fill="#368f2e" stroke="#368f2e" stroke-width="0.7"/>
<path d="M982.6,667.8L981.0,674.2L965.8,665.1L967.4,658.9Z" fill="#37902e" stroke="#37902e" stroke-width="0.7"/>
<path d="M981.5,672.4L979.5,678.8L964.4,669.4L966.3,663.3Z" fill="#38922f" stroke="#38922f" stroke-width="0.7"/>
<path d="M980.1,677.0L977.9,683.3L962.9,673.7L965.0,667.7Z" fill="#38932f" stroke="#38932f" stroke-width="0.7"/>
<path d="M978.6,681.5L976.0,687.9L961.1,678.0L963.5,672.0Z" fill="#3b9631" stroke="#3b9631" stroke-width="0.7"/>
<path d="M976.8,686.1L974.0,692.4L959.2,682.3L961.8,676.3Z" fill="#3d9933" stroke="#3d9933" stroke-width="0.7"/>
<path d="M974.8,690.6L971.7,696.8L957.0,686.6L960.0,680.6Z" fill="#409d35" stroke="#409d35" stroke-width="0.7"/>
<path d="M972.6,695.0L969.3,701.2L954.7,690.8L957.9,684.9Z" fill="#43a138" stroke="#43a138" stroke-width="0.7"/>
<path d="M970.3,699.5L966.6,705.6L952.2,694.9L955.6,689.1Z" fill="#46a43a" stroke="#46a43a" stroke-width="0.7"/>
<path d="M967.7,703.9L963.8,710.0L949.5,699.1L953.2,693.3Z" fill="#49a83c" stroke="#49a83c" stroke-width="0.7"/>
<path d="M964.9,708.2L960.7,714.3L946.6,703.2L950.6,697.4Z" fill="#4cab3e" stroke="#4cab3e" stroke-width="0.7"/>
<path d="M961.9,712.6L957.5,718.5L943.5,707.2L947.7,701.5Z" fill="#4faf40" stroke="#4faf40" stroke-width="0.7"/>
<path d="M958.8,716.8L954.0,722.7L940.2,711.2L944.7,705.6Z" fill="#52b343" stroke="#52b343" stroke-width="0.7"/>
<path d="M955.4,721.1L950.4,726.9L936.8,715.2L941.6,709.6Z" fill="#57b847" stroke="#57b847" stroke-width="0.7"/>
<path d="M951.9,725.2L946.6,731.0L933.2,719.0L938.2,713.6Z" fill="#5bbc4b" stroke="#5bbc4b" stroke-width="0.7"/>
<path d="M948.2,729.3L942.6,735.0L929.4,722.9L934.7,717.5Z" fill="#5fc04e" stroke="#5fc04e" stroke-width="0.7"/>
<path d="M944.2,733.4L938.5,739.0L925.4,726.7L930.9,721.3Z" fill="#64c552" stroke="#64c552" stroke-width="0.7"/>
<path d="M940.1,737.4L934.1,742.9L921.3,730.4L927.1,725.2Z" fill="#68c956" stroke="#68c956" stroke-width="0.7"/>
<path d="M935.9,741.3L929.6,746.7L917.0,734.0L923.0,728.9Z" fill="#6bcc58" stroke="#6bcc58" stroke-width="0.7"/>
<path d="M931.4,745.2L924.9,750.5L912.6,737.6L918.8,732.6Z" fill="#69cb56" stroke="#69cb56" stroke-width="0.7"/>
<path d="M926.8,749.0L920.0,754.2L908.0,741.1L914.4,736.2Z" fill="#67c955" stroke="#67c955" stroke-width="0.7"/>
<path d="M922.0,752.7L915.0,757.8L903.2,744.6L909.8,739.7Z" fill="#65c753" stroke="#65c753" stroke-width="0.7"/>
<path d="M917.0,756.4L909.8,761.3L898.3,747.9L905.1,743.2Z" fill="#62c550" stroke="#62c550" stroke-width="0.7"/>
<path d="M911.9,759.9L904.5,764.8L893.2,751.2L900.3,746.6Z" fill="#5ec24d" stroke="#5ec24d" stroke-width="0.7"/>
<path d="M906.6,763.4L899.0,768.2L888.0,754.4L895.2,749.9Z" fill="#5abf49" stroke="#5abf49" stroke-width="0.7"/>
<path d="M901.2,766.9L893.3,771.5L882.6,757.6L890.1,753.2Z" fill="#56bc45" stroke="#56bc45" stroke-width="0.7"/>
<path d="M895.6,770.2L887.5,774.7L877.1,760.7L884.8,756.3Z" fill="#51bf3f" stroke="#51bf3f" stroke-width="0.7"/>
<path d="M889.8,773.5L881.5,777.9L871.4,763.7L879.3,759.4Z" fill="#50bf3e" stroke="#50bf3e" stroke-width="0.7"/>
<path d="M883.9,776.6L875.3,780.9L865.5,766.6L873.6,762.5Z" fill="#50bf3d" stroke="#50bf3d" stroke-width="0.7"/>
<path d="M877.8,779.7L869.1,783.9L859.6,769.4L867.8,765.4Z" fill="#4fbf3c" stroke="#4fbf3c" stroke-width="0.7"/>
<path d="M871.6,782.7L862.6,786.8L853.5,772.1L861.9,768.3Z" fill="#4ec03c" stroke="#4ec03c" stroke-width="0.7"/>
<path d="M865.2,785.6L856.1,789.5L847.3,774.7L855.9,771.0Z" fill="#4ec03b" stroke="#4ec03b" stroke-width="0.7"/>
<path d="M858.7,788.4L849.4,792.2L840.9,777.3L849.7,773.7Z" fill="#4dc03a" stroke="#4dc03a" stroke-width="0.7"/>
<path d="M852.1,791.2L842.7,794.8L834.5,779.7L843.5,776.3Z" fill="#4cc039" stroke="#4cc039" stroke-width="0.7"/>
<path d="M845.4,793.8L835.8,797.2L828.0,782.0L837.1,778.7Z" fill="#4cc138" stroke="#4cc138" stroke-width="0.7"/>
<path d="M838.5,796.2L828.8,799.6L821.3,784.3L830.6,781.1Z" fill="#4bc137" stroke="#4bc137" stroke-width="0.7"/>
<path d="M831.5,798.6L821.6,801.8L814.5,786.4L823.9,783.4Z" fill="#4bc136" stroke="#4bc136" stroke-width="0.7"/>
<path d="M824.5,800.9L814.4,803.9L807.7,788.4L817.2,785.6Z" fill="#4ac136" stroke="#4ac136" stroke-width="0.7"/>
<path d="M817.3,803.1L807.1,805.9L800.8,790.3L810.4,787.6Z" fill="#4ac235" stroke="#4ac235" stroke-width="0.7"/>
<path d="M810.0,805.2L799.7,807.9L793.7,792.2L803.5,789.6Z" fill="#49c234" stroke="#49c234" stroke-width="0.7"/>
<path d="M802.7,807.1L792.2,809.6L786.6,793.9L796.5,791.5Z" fill="#49c334" stroke="#49c334" stroke-width="0.7"/>
<path d="M795.2,808.9L784.7,811.3L779.5,795.5L789.5,793.2Z" fill="#49c333" stroke="#49c333" stroke-width="0.7"/>
<path d="M787.7,810.7L777.1,812.9L772.2,796.9L782.3,794.8Z" fill="#48c433" stroke="#48c433" stroke-width="0.7"/>
<path d="M780.1,812.3L769.4,814.3L764.9,798.3L775.1,796.4Z" fill="#48c433" stroke="#48c433" stroke-width="0.7"/>
<path d="M772.4,813.8L761.6,815.6L757.5,799.6L767.8,797.8Z" fill="#48c433" stroke="#48c433" stroke-width="0.7"/>
<path d="M764.7,815.1L753.8,816.9L750.1,800.7L760.5,799.1Z" fill="#48c433" stroke="#48c433" stroke-width="0.7"/>
<path d="M756.9,816.4L745.9,817.9L742.6,801.7L753.1,800.3Z" fill="#48c532" stroke="#48c532" stroke-width="0.7"/>
<path d="M749.0,817.5L738.0,818.9L735.1,802.7L745.6,801.3Z" fill="#47c532" stroke="#47c532" stroke-width="0.7"/>
<path d="M741.1,818.5L730.0,819.7L727.6,803.5L738.1,802.3Z" fill="#47c532" stroke="#47c532" stroke-width="0.7"/>
<path d="M733.2,819.4L722.0,820.5L720.0,804.1L730.6,803.2Z" fill="#47c532" stroke="#47c532" stroke-width="0.7"/>
<path d="M725.2,820.2L714.0,821.1L712.4,804.7L723.0,803.9Z" fill="#47c532" stroke="#47c532" stroke-width="0.7"/>
<path d="M717.2,820.8L705.9,821.5L704.7,805.2L715.4,804.5Z" fill="#47c532" stroke="#47c532" stroke-width="0.7"/>
<path d="M709.1,821.4L697.9,821.9L697.0,805.5L707.7,805.0Z" fill="#47c632" stroke="#47c632" stroke-width="0.7"/>
<path d="M701.1,821.7L689.8,822.1L689.4,805.7L700.1,805.4Z" fill="#47c632" stroke="#47c632" stroke-width="0.7"/>
<path d="M693.0,822.0L681.7,822.2L681.7,805.8L692.4,805.6Z" fill="#47c632" stroke="#47c632" stroke-width="0.7"/>
<path d="M684.9,822.2L673.6,822.2L674.0,805.8L684.7,805.8Z" fill="#47c632" stroke="#47c632" stroke-width="0.7"/>
<path d="M676.8,822.2L665.5,822.0L666.3,805.6L677.1,805.8Z" fill="#47c632" stroke="#47c632" stroke-width="0.7"/>
<path d="M668.7,822.1L657.4,821.7L658.7,805.4L669.4,805.7Z" fill="#47c632" stroke="#47c632" stroke-width="0.7"/>
<path d="M660.6,821.9L649.4,821.4L651.0,805.0L661.7,805.5Z" fill="#47c632" stroke="#47c632" stroke-width="0.7"/>
<path d="M884.8,517.5L892.2,521.9L880.9,520.1L873.9,515.9Z" fill="#2e7a22" stroke="#2e7a22" stroke-width="0.7"/>
<path d="M890.1,520.6L897.3,525.2L885.8,523.3L879.0,518.9Z" fill="#2e7a22" stroke="#2e7a22" stroke-width="0.7"/>
<path d="M895.2,523.9L902.2,528.6L890.5,526.4L883.8,522.0Z" fill="#2e7a22" stroke="#2e7a22" stroke-width="0.7"/>
<path d="M900.3,527.2L907.0,532.0L895.0,529.7L888.6,525.2Z" fill="#2e7b23" stroke="#2e7b23" stroke-width="0.7"/>
<path d="M905.1,530.6L911.7,535.5L899.4,533.0L893.2,528.4Z" fill="#2e7b23" stroke="#2e7b23" stroke-width="0.7"/>
<path d="M909.8,534.1L916.2,539.1L903.6,536.4L897.7,531.7Z" fill="#2e7c23" stroke="#2e7c23" stroke-width="0.7"/>
<path d="M914.4,537.6L920.5,542.7L907.7,539.8L902.0,535.0Z" fill="#2e7c23" stroke="#2e7c23" stroke-width="0.7"/>
<path d="M918.8,541.2L924.6,546.4L911.7,543.4L906.1,538.5Z" fill="#2e7c24" stroke="#2e7c24" stroke-width="0.7"/>
<path d="M923.0,544.9L928.6,550.2L915.4,546.9L910.1,541.9Z" fill="#2f7d24" stroke="#2f7d24" stroke-width="0.7"/>
<path d="M927.1,548.6L932.4,554.0L919.1,550.6L914.0,545.5Z" fill="#2f7d24" stroke="#2f7d24" stroke-width="0.7"/>
<path d="M930.9,552.5L936.1,557.9L922.5,554.2L917.6,549.1Z" fill="#2f7e25" stroke="#2f7e25" stroke-width="0.7"/>
<path d="M934.7,556.3L939.6,561.8L925.8,558.0L921.2,552.8Z" fill="#2f7e25" stroke="#2f7e25" stroke-width="0.7"/>
<path d="M938.2,560.2L942.9,565.8L928.9,561.8L924.5,556.5Z" fill="#2f7e25" stroke="#2f7e25" stroke-width="0.7"/>
<path d="M941.6,564.2L946.0,569.8L931.9,565.6L927.7,560.2Z" fill="#2f7f26" stroke="#2f7f26" stroke-width="0.7"/>
<path d="M944.7,568.2L948.9,573.9L934.6,569.4L930.7,564.0Z" fill="#2f7f26" stroke="#2f7f26" stroke-width="0.7"/>
<path d="M947.7,572.3L951.6,578.0L937.2,573.4L933.5,567.9Z" fill="#2f8026" stroke="#2f8026" stroke-width="0.7"/>
<path d="M950.6,576.4L954.2,582.2L939.7,577.3L936.2,571.8Z" fill="#308026" stroke="#308026" stroke-width="0.7"/>
<path d="M953.2,580.5L956.6,586.4L941.9,581.3L938.7,575.7Z" fill="#308027" stroke="#308027" stroke-width="0.7"/>
<path d="M955.6,584.7L958.7,590.6L944.0,585.3L941.0,579.7Z" fill="#308127" stroke="#308127" stroke-width="0.7"/>
<path d="M957.9,588.9L960.7,594.9L945.8,589.4L943.2,583.7Z" fill="#308127" stroke="#308127" stroke-width="0.7"/>
<path d="M960.0,593.2L962.5,599.2L947.5,593.4L945.1,587.7Z" fill="#308228" stroke="#308228" stroke-width="0.7"/>
<path d="M961.8,597.5L964.1,603.5L949.1,597.5L946.9,591.8Z" fill="#308228" stroke="#308228" stroke-width="0.7"/>
<path d="M963.5,601.8L965.5,607.9L950.4,601.7L948.5,595.9Z" fill="#308228" stroke="#308228" stroke-width="0.7"/>
<path d="M965.0,606.1L966.7,612.2L951.5,605.8L949.9,600.0Z" fill="#308329" stroke="#308329" stroke-width="0.7"/>
<path d="M966.3,610.5L967.8,616.6L952.5,610.0L951.1,604.1Z" fill="#318329" stroke="#318329" stroke-width="0.7"/>
<path d="M967.4,614.9L968.6,621.0L953.3,614.1L952.1,608.3Z" fill="#318429" stroke="#318429" stroke-width="0.7"/>
<path d="M968.3,619.2L969.2,625.4L953.8,618.3L953.0,612.5Z" fill="#318429" stroke="#318429" stroke-width="0.7"/>
<path d="M969.0,623.6L969.6,629.8L954.2,622.5L953.6,616.6Z" fill="#31852a" stroke="#31852a" stroke-width="0.7"/>
<path d="M969.5,628.1L969.8,634.2L954.4,626.7L954.1,620.8Z" fill="#32862a" stroke="#32862a" stroke-width="0.7"/>
<path d="M969.8,632.5L969.8,638.7L954.5,630.9L954.4,625.0Z" fill="#33882b" stroke="#33882b" stroke-width="0.7"/>
<path d="M969.9,636.9L969.7,643.1L954.3,635.1L954.5,629.2Z" fill="#33892b" stroke="#33892b" stroke-width="0.7"/>
<path d="M969.8,641.3L969.3,647.5L953.9,639.3L954.4,633.4Z" fill="#348a2c" stroke="#348a2c" stroke-width="0.7"/>
<path d="M969.5,645.7L968.7,651.9L953.4,643.4L954.1,637.6Z" fill="#348b2d" stroke="#348b2d" stroke-width="0.7"/>
<path d="M969.0,650.2L967.9,656.3L952.7,647.6L953.6,641.8Z" fill="#358d2d" stroke="#358d2d" stroke-width="0.7"/>
<path d="M968.3,654.6L967.0,660.7L951.7,651.8L953.0,645.9Z" fill="#368e2e" stroke="#368e2e" stroke-width="0.7"/>
<path d="M967.4,658.9L965.8,665.1L950.6,655.9L952.1,650.1Z" fill="#368f2e" stroke="#368f2e" stroke-width="0.7"/>
<path d="M966.3,663.3L964.4,669.4L949.3,660.0L951.1,654.3Z" fill="#37912f" stroke="#37912f" stroke-width="0.7"/>
<path d="M965.0,667.7L962.9,673.7L947.9,664.1L949.9,658.4Z" fill="#38922f" stroke="#38922f" stroke-width="0.7"/>
<path d="M963.5,672.0L961.1,678.0L946.2,668.2L948.5,662.5Z" fill="#399430" stroke="#399430" stroke-width="0.7"/>
<path d="M961.8,676.3L959.2,682.3L944.3,672.3L946.9,666.6Z" fill="#3c9732" stroke="#3c9732" stroke-width="0.7"/>
<path d="M960.0,680.6L957.0,686.6L942.3,676.3L945.1,670.7Z" fill="#3e9b34" stroke="#3e9b34" stroke-width="0.7"/>
<path d="M957.9,684.9L954.7,690.8L940.1,680.3L943.2,674.7Z" fill="#419e36" stroke="#419e36" stroke-width="0.7"/>
<path d="M955.6,689.1L952.2,694.9L937.7,684.3L941.0,678.7Z" fill="#43a138" stroke="#43a138" stroke-width="0.7"/>
<path d="M953.2,693.3L949.5,699.1L935.2,688.2L938.7,682.7Z" fill="#46a539" stroke="#46a539" stroke-width="0.7"/>
<path d="M950.6,697.4L946.6,703.2L932.4,692.1L936.2,686.6Z" fill="#48a83b" stroke="#48a83b" stroke-width="0.7"/>
<path d="M947.7,701.5L943.5,707.2L929.5,695.9L933.5,690.5Z" fill="#4bac3d" stroke="#4bac3d" stroke-width="0.7"/>
<path d="M944.7,705.6L940.2,711.2L926.4,699.7L930.7,694.4Z" fill="#4eaf3f" stroke="#4eaf3f" stroke-width="0.7"/>
<path d="M941.6,709.6L936.8,715.2L923.2,703.4L927.7,698.2Z" fill="#52b342" stroke="#52b342" stroke-width="0.7"/>
<path d="M938.2,713.6L933.2,719.0L919.8,707.1L924.5,701.9Z" fill="#56b746" stroke="#56b746" stroke-width="0.7"/>
<path d="M934.7,717.5L929.4,722.9L916.2,710.7L921.2,705.6Z" fill="#5abb49" stroke="#5abb49" stroke-width="0.7"/>
<path d="M930.9,721.3L925.4,726.7L912.4,714.3L917.6,709.3Z" fill="#5ebf4c" stroke="#5ebf4c" stroke-width="0.7"/>
<path d="M927.1,725.2L921.3,730.4L908.5,717.9L914.0,712.9Z" fill="#62c350" stroke="#62c350" stroke-width="0.7"/>
<path d="M923.0,728.9L917.0,734.0L904.5,721.3L910.1,716.5Z" fill="#64c652" stroke="#64c652" stroke-width="0.7"/>
<path d="M918.8,732.6L912.6,737.6L900.3,724.7L906.1,719.9Z" fill="#63c551" stroke="#63c551" stroke-width="0.7"/>
<path d="M914.4,736.2L908.0,741.1L895.9,728.0L902.0,723.4Z" fill="#61c34f" stroke="#61c34f" stroke-width="0.7"/>
<path d="M909.8,739.7L903.2,744.6L891.4,731.3L897.7,726.7Z" fill="#5fc14d" stroke="#5fc14d" stroke-width="0.7"/>
<path d="M905.1,743.2L898.3,747.9L886.7,734.5L893.2,730.0Z" fill="#5dbf4b" stroke="#5dbf4b" stroke-width="0.7"/>
<path d="M900.3,746.6L893.2,751.2L881.9,737.6L888.6,733.2Z" fill="#59bc48" stroke="#59bc48" stroke-width="0.7"/>
<path d="M895.2,749.9L888.0,754.4L877.0,740.7L883.8,736.4Z" fill="#56ba45" stroke="#56ba45" stroke-width="0.7"/>
<path d="M890.1,753.2L882.6,757.6L871.9,743.7L879.0,739.5Z" fill="#53b742" stroke="#53b742" stroke-width="0.7"/>
<path d="M884.8,756.3L877.1,760.7L866.6,746.6L873.9,742.5Z" fill="#4ebb3d" stroke="#4ebb3d" stroke-width="0.7"/>
<path d="M879.3,759.4L871.4,763.7L861.2,749.4L868.7,745.4Z" fill="#4dbc3c" stroke="#4dbc3c" stroke-width="0.7"/>
<path d="M873.6,762.5L865.5,766.6L855.7,752.2L863.4,748.3Z" fill="#4dbc3b" stroke="#4dbc3b" stroke-width="0.7"/>
<path d="M867.8,765.4L859.6,769.4L850.1,754.9L857.9,751.1Z" fill="#4cbd3a" stroke="#4cbd3a" stroke-width="0.7"/>
<path d="M861.9,768.3L853.5,772.1L844.3,757.4L852.3,753.8Z" fill="#4cbd3a" stroke="#4cbd3a" stroke-width="0.7"/>
<path d="M855.9,771.0L847.3,774.7L838.4,759.9L846.6,756.4Z" fill="#4bbe39" stroke="#4bbe39" stroke-width="0.7"/>
<path d="M849.7,773.7L840.9,777.3L832.4,762.3L840.8,759.0Z" fill="#4bbe38" stroke="#4bbe38" stroke-width="0.7"/>
<path d="M843.5,776.3L834.5,779.7L826.3,764.6L834.8,761.4Z" fill="#4abf37" stroke="#4abf37" stroke-width="0.7"/>
<path d="M837.1,778.7L828.0,782.0L820.1,766.9L828.8,763.7Z" fill="#4abf37" stroke="#4abf37" stroke-width="0.7"/>
<path d="M830.6,781.1L821.3,784.3L813.8,769.0L822.6,766.0Z" fill="#4ac036" stroke="#4ac036" stroke-width="0.7"/>
<path d="M823.9,783.4L814.5,786.4L807.5,771.0L816.3,768.1Z" fill="#49c035" stroke="#49c035" stroke-width="0.7"/>
<path d="M817.2,785.6L807.7,788.4L801.0,772.9L810.0,770.2Z" fill="#49c135" stroke="#49c135" stroke-width="0.7"/>
<path d="M810.4,787.6L800.8,790.3L794.4,774.7L803.5,772.2Z" fill="#48c234" stroke="#48c234" stroke-width="0.7"/>
<path d="M803.5,789.6L793.7,792.2L787.8,776.5L797.0,774.0Z" fill="#48c234" stroke="#48c234" stroke-width="0.7"/>
<path d="M796.5,791.5L786.6,793.9L781.0,778.1L790.4,775.8Z" fill="#48c333" stroke="#48c333" stroke-width="0.7"/>
<path d="M789.5,793.2L779.5,795.5L774.2,779.6L783.7,777.4Z" fill="#48c433" stroke="#48c433" stroke-width="0.7"/>
<path d="M782.3,794.8L772.2,796.9L767.4,781.0L776.9,779.0Z" fill="#48c532" stroke="#48c532" stroke-width="0.7"/>
<path d="M775.1,796.4L764.9,798.3L760.5,782.3L770.1,780.5Z" fill="#48c532" stroke="#48c532" stroke-width="0.7"/>
<path d="M767.8,797.8L757.5,799.6L753.5,783.5L763.2,781.8Z" fill="#47c532" stroke="#47c532" stroke-width="0.7"/>
<path d="M760.5,799.1L750.1,800.7L746.5,784.6L756.3,783.0Z" fill="#47c532" stroke="#47c532" stroke-width="0.7"/>
<path d="M753.1,800.3L742.6,801.7L739.4,785.6L749.2,784.2Z" fill="#47c532" stroke="#47c532" stroke-width="0.7"/>
<path d="M745.6,801.3L735.1,802.7L732.3,786.4L742.2,785.2Z" fill="#47c532" stroke="#47c532" stroke-width="0.7"/>
<path d="M738.1,802.3L727.6,803.5L725.1,787.2L735.1,786.1Z" fill="#47c532" stroke="#47c532" stroke-width="0.7"/>
<path d="M730.6,803.2L720.0,804.1L717.9,787.8L727.9,786.9Z" fill="#47c532" stroke="#47c532" stroke-width="0.7"/>
<path d="M723.0,803.9L712.4,804.7L710.7,788.4L720.8,787.6Z" fill="#47c532" stroke="#47c532" stroke-width="0.7"/>
<path d="M715.4,804.5L704.7,805.2L703.5,788.8L713.6,788.2Z" fill="#47c532" stroke="#47c532" stroke-width="0.7"/>
<path d="M707.7,805.0L697.0,805.5L696.2,789.1L706.3,788.6Z" fill="#47c632" stroke="#47c632" stroke-width="0.7"/>
<path d="M700.1,805.4L689.4,805.7L689.0,789.3L699.1,789.0Z" fill="#47c632" stroke="#47c632" stroke-width="0.7"/>
<path d="M692.4,805.6L681.7,805.8L681.7,789.4L691.8,789.2Z" fill="#47c632" stroke="#47c632" stroke-width="0.7"/>
<path d="M684.7,805.8L674.0,805.8L674.4,789.4L684.6,789.4Z" fill="#47c632" stroke="#47c632" stroke-width="0.7"/>
<path d="M677.1,805.8L666.3,805.6L667.2,789.2L677.3,789.4Z" fill="#47c632" stroke="#47c632" stroke-width="0.7"/>
<path d="M669.4,805.7L658.7,805.4L659.9,789.0L670.0,789.3Z" fill="#47c632" stroke="#47c632" stroke-width="0.7"/>
<path d="M661.7,805.5L651.0,805.0L652.6,788.6L662.8,789.1Z" fill="#47c632" stroke="#47c632" stroke-width="0.7"/>
<path d="M873.9,515.9L880.9,520.1L869.7,518.4L863.1,514.4Z" fill="#2e7a22" stroke="#2e7a22" stroke-width="0.7"/>
<path d="M879.0,518.9L885.8,523.3L874.3,521.3L867.8,517.2Z" fill="#2e7a22" stroke="#2e7a22" stroke-width="0.7"/>
<path d="M883.8,522.0L890.5,526.4L878.7,524.3L872.4,520.1Z" fill="#2e7a22" stroke="#2e7a22" stroke-width="0.7"/>
<path d="M888.6,525.2L895.0,529.7L883.0,527.4L876.9,523.1Z" fill="#2e7b23" stroke="#2e7b23" stroke-width="0.7"/>
<path d="M893.2,528.4L899.4,533.0L887.1,530.5L881.3,526.2Z" fill="#2e7b23" stroke="#2e7b23" stroke-width="0.7"/>
<path d="M897.7,531.7L903.6,536.4L891.1,533.7L885.5,529.3Z" fill="#2e7c23" stroke="#2e7c23" stroke-width="0.7"/>
<path d="M902.0,535.0L907.7,539.8L895.0,537.0L889.5,532.5Z" fill="#2e7c23" stroke="#2e7c23" stroke-width="0.7"/>
<path d="M906.1,538.5L911.7,543.4L898.7,540.3L893.5,535.7Z" fill="#2e7c24" stroke="#2e7c24" stroke-width="0.7"/>
<path d="M910.1,541.9L915.4,546.9L902.3,543.7L897.2,539.0Z" fill="#2e7d24" stroke="#2e7d24" stroke-width="0.7"/>
<path d="M914.0,545.5L919.1,550.6L905.7,547.1L900.9,542.3Z" fill="#2f7d24" stroke="#2f7d24" stroke-width="0.7"/>
<path d="M917.6,549.1L922.5,554.2L908.9,550.6L904.3,545.8Z" fill="#2f7e25" stroke="#2f7e25" stroke-width="0.7"/>
<path d="M921.2,552.8L925.8,558.0L912.0,554.1L907.7,549.2Z" fill="#2f7e25" stroke="#2f7e25" stroke-width="0.7"/>
<path d="M924.5,556.5L928.9,561.8L915.0,557.7L910.8,552.7Z" fill="#2f7e25" stroke="#2f7e25" stroke-width="0.7"/>
<path d="M927.7,560.2L931.9,565.6L917.8,561.3L913.8,556.3Z" fill="#2f7f26" stroke="#2f7f26" stroke-width="0.7"/>
<path d="M930.7,564.0L934.6,569.4L920.4,565.0L916.7,559.9Z" fill="#2f7f26" stroke="#2f7f26" stroke-width="0.7"/>
<path d="M933.5,567.9L937.2,573.4L922.8,568.7L919.3,563.5Z" fill="#2f7f26" stroke="#2f7f26" stroke-width="0.7"/>
<path d="M936.2,571.8L939.7,577.3L925.1,572.4L921.9,567.2Z" fill="#2f8026" stroke="#2f8026" stroke-width="0.7"/>
<path d="M938.7,575.7L941.9,581.3L927.2,576.2L924.2,570.9Z" fill="#308027" stroke="#308027" stroke-width="0.7"/>
<path d="M941.0,579.7L944.0,585.3L929.2,580.0L926.4,574.7Z" fill="#308127" stroke="#308127" stroke-width="0.7"/>
<path d="M943.2,583.7L945.8,589.4L930.9,583.8L928.4,578.5Z" fill="#308127" stroke="#308127" stroke-width="0.7"/>
<path d="M945.1,587.7L947.5,593.4L932.6,587.7L930.3,582.3Z" fill="#308128" stroke="#308128" stroke-width="0.7"/>
<path d="M946.9,591.8L949.1,597.5L934.0,591.6L931.9,586.1Z" fill="#308228" stroke="#308228" stroke-width="0.7"/>
<path d="M948.5,595.9L950.4,601.7L935.2,595.5L933.4,590.0Z" fill="#308228" stroke="#308228" stroke-width="0.7"/>
<path d="M949.9,600.0L951.5,605.8L936.3,599.4L934.8,593.9Z" fill="#308229" stroke="#308229" stroke-width="0.7"/>
<path d="M951.1,604.1L952.5,610.0L937.2,603.3L935.9,597.8Z" fill="#308329" stroke="#308329" stroke-width="0.7"/>
<path d="M952.1,608.3L953.3,614.1L937.9,607.2L936.9,601.7Z" fill="#308329" stroke="#308329" stroke-width="0.7"/>
<path d="M953.0,612.5L953.8,618.3L938.5,611.2L937.7,605.7Z" fill="#318429" stroke="#318429" stroke-width="0.7"/>
<path d="M953.6,616.6L954.2,622.5L938.9,615.2L938.3,609.6Z" fill="#31852a" stroke="#31852a" stroke-width="0.7"/>
<path d="M954.1,620.8L954.4,626.7L939.1,619.1L938.7,613.6Z" fill="#32862a" stroke="#32862a" stroke-width="0.7"/>
<path d="M954.4,625.0L954.5,630.9L939.1,623.1L939.0,617.5Z" fill="#32872b" stroke="#32872b" stroke-width="0.7"/>
<path d="M954.5,629.2L954.3,635.1L938.9,627.1L939.1,621.5Z" fill="#33882b" stroke="#33882b" stroke-width="0.7"/>
<path d="M954.4,633.4L953.9,639.3L938.6,631.0L939.0,625.5Z" fill="#348a2c" stroke="#348a2c" stroke-width="0.7"/>
<path d="M954.1,637.6L953.4,643.4L938.1,635.0L938.7,629.4Z" fill="#348b2c" stroke="#348b2c" stroke-width="0.7"/>
<path d="M953.6,641.8L952.7,647.6L937.4,638.9L938.3,633.4Z" fill="#358c2d" stroke="#358c2d" stroke-width="0.7"/>
<path d="M953.0,645.9L951.7,651.8L936.5,642.8L937.7,637.3Z" fill="#358d2d" stroke="#358d2d" stroke-width="0.7"/>
<path d="M952.1,650.1L950.6,655.9L935.5,646.8L936.9,641.3Z" fill="#368e2e" stroke="#368e2e" stroke-width="0.7"/>
<path d="M951.1,654.3L949.3,660.0L934.2,650.7L935.9,645.2Z" fill="#37902e" stroke="#37902e" stroke-width="0.7"/>
<path d="M949.9,658.4L947.9,664.1L932.9,654.5L934.8,649.1Z" fill="#37912f" stroke="#37912f" stroke-width="0.7"/>
<path d="M948.5,662.5L946.2,668.2L931.3,658.4L933.4,653.0Z" fill="#389230" stroke="#389230" stroke-width="0.7"/>
<path d="M946.9,666.6L944.3,672.3L929.5,662.2L931.9,656.9Z" fill="#3a9531" stroke="#3a9531" stroke-width="0.7"/>
<path d="M945.1,670.7L942.3,676.3L927.6,666.0L930.3,660.7Z" fill="#3c9833" stroke="#3c9833" stroke-width="0.7"/>
<path d="M943.2,674.7L940.1,680.3L925.5,669.8L928.4,664.5Z" fill="#3e9b34" stroke="#3e9b34" stroke-width="0.7"/>
<path d="M941.0,678.7L937.7,684.3L923.3,673.6L926.4,668.3Z" fill="#419e35" stroke="#419e35" stroke-width="0.7"/>
<path d="M938.7,682.7L935.2,688.2L920.9,677.3L924.2,672.1Z" fill="#43a237" stroke="#43a237" stroke-width="0.7"/>
<path d="M936.2,686.6L932.4,692.1L918.3,680.9L921.9,675.8Z" fill="#45a538" stroke="#45a538" stroke-width="0.7"/>
<path d="M933.5,690.5L929.5,695.9L915.5,684.6L919.3,679.5Z" fill="#47a83a" stroke="#47a83a" stroke-width="0.7"/>
<path d="M930.7,694.4L926.4,699.7L912.6,688.2L916.7,683.1Z" fill="#49ab3b" stroke="#49ab3b" stroke-width="0.7"/>
<path d="M927.7,698.2L923.2,703.4L909.6,691.7L913.8,686.7Z" fill="#4daf3e" stroke="#4daf3e" stroke-width="0.7"/>
<path d="M924.5,701.9L919.8,707.1L906.3,695.2L910.8,690.3Z" fill="#50b241" stroke="#50b241" stroke-width="0.7"/>
<path d="M921.2,705.6L916.2,710.7L903.0,698.6L907.7,693.8Z" fill="#54b644" stroke="#54b644" stroke-width="0.7"/>
<path d="M917.6,709.3L912.4,714.3L899.4,702.0L904.3,697.2Z" fill="#57b947" stroke="#57b947" stroke-width="0.7"/>
<path d="M914.0,712.9L908.5,717.9L895.7,705.3L900.9,700.7Z" fill="#5bbd49" stroke="#5bbd49" stroke-width="0.7"/>
<path d="M910.1,716.5L904.5,721.3L891.9,708.6L897.2,704.0Z" fill="#5ec04c" stroke="#5ec04c" stroke-width="0.7"/>
<path d="M906.1,719.9L900.3,724.7L887.9,711.8L893.5,707.3Z" fill="#5dbf4b" stroke="#5dbf4b" stroke-width="0.7"/>
<path d="M902.0,723.4L895.9,728.0L883.8,715.0L889.5,710.5Z" fill="#5bbd4a" stroke="#5bbd4a" stroke-width="0.7"/>
<path d="M897.7,726.7L891.4,731.3L879.5,718.1L885.5,713.7Z" fill="#59bb48" stroke="#59bb48" stroke-width="0.7"/>
<path d="M893.2,730.0L886.7,734.5L875.1,721.1L881.3,716.8Z" fill="#57b946" stroke="#57b946" stroke-width="0.7"/>
<path d="M888.6,733.2L881.9,737.6L870.6,724.0L876.9,719.9Z" fill="#54b744" stroke="#54b744" stroke-width="0.7"/>
<path d="M883.8,736.4L877.0,740.7L866.0,726.9L872.4,722.9Z" fill="#51b541" stroke="#51b541" stroke-width="0.7"/>
<path d="M879.0,739.5L871.9,743.7L861.2,729.7L867.8,725.8Z" fill="#4fb33e" stroke="#4fb33e" stroke-width="0.7"/>
<path d="M873.9,742.5L866.6,746.6L856.2,732.5L863.1,728.6Z" fill="#4bb83a" stroke="#4bb83a" stroke-width="0.7"/>
<path d="M868.7,745.4L861.2,749.4L851.1,735.2L858.2,731.4Z" fill="#4bb83a" stroke="#4bb83a" stroke-width="0.7"/>
<path d="M863.4,748.3L855.7,752.2L845.9,737.8L853.1,734.1Z" fill="#4ab939" stroke="#4ab939" stroke-width="0.7"/>
<path d="M857.9,751.1L850.1,754.9L840.6,740.3L848.0,736.8Z" fill="#4aba38" stroke="#4aba38" stroke-width="0.7"/>
<path d="M852.3,753.8L844.3,757.4L835.1,742.8L842.7,739.3Z" fill="#49bb38" stroke="#49bb38" stroke-width="0.7"/>
<path d="M846.6,756.4L838.4,759.9L829.6,745.1L837.3,741.8Z" fill="#49bc37" stroke="#49bc37" stroke-width="0.7"/>
<path d="M840.8,759.0L832.4,762.3L823.9,747.4L831.8,744.2Z" fill="#49bc36" stroke="#49bc36" stroke-width="0.7"/>
<path d="M834.8,761.4L826.3,764.6L818.2,749.6L826.2,746.5Z" fill="#48bd36" stroke="#48bd36" stroke-width="0.7"/>
<path d="M828.8,763.7L820.1,766.9L812.3,751.7L820.5,748.7Z" fill="#48be35" stroke="#48be35" stroke-width="0.7"/>
<path d="M822.6,766.0L813.8,769.0L806.4,753.7L814.7,750.9Z" fill="#48bf35" stroke="#48bf35" stroke-width="0.7"/>
<path d="M816.3,768.1L807.5,771.0L800.4,755.6L808.8,752.9Z" fill="#48c034" stroke="#48c034" stroke-width="0.7"/>
<path d="M810.0,770.2L801.0,772.9L794.2,757.4L802.8,754.9Z" fill="#48c134" stroke="#48c134" stroke-width="0.7"/>
<path d="M803.5,772.2L794.4,774.7L788.0,759.1L796.7,756.7Z" fill="#47c133" stroke="#47c133" stroke-width="0.7"/>
<path d="M797.0,774.0L787.8,776.5L781.8,760.8L790.5,758.5Z" fill="#47c233" stroke="#47c233" stroke-width="0.7"/>
<path d="M790.4,775.8L781.0,778.1L775.4,762.3L784.3,760.1Z" fill="#47c333" stroke="#47c333" stroke-width="0.7"/>
<path d="M783.7,777.4L774.2,779.6L769.0,763.7L778.0,761.7Z" fill="#47c432" stroke="#47c432" stroke-width="0.7"/>
<path d="M776.9,779.0L767.4,781.0L762.6,765.1L771.6,763.2Z" fill="#47c532" stroke="#47c532" stroke-width="0.7"/>
<path d="M770.1,780.5L760.5,782.3L756.0,766.3L765.1,764.5Z" fill="#47c532" stroke="#47c532" stroke-width="0.7"/>
<path d="M763.2,781.8L753.5,783.5L749.4,767.4L758.6,765.8Z" fill="#47c532" stroke="#47c532" stroke-width="0.7"/>
<path d="M756.3,783.0L746.5,784.6L742.8,768.4L752.1,767.0Z" fill="#47c532" stroke="#47c532" stroke-width="0.7"/>
<path d="M749.2,784.2L739.4,785.6L736.1,769.4L745.4,768.0Z" fill="#47c532" stroke="#47c532" stroke-width="0.7"/>
<path d="M742.2,785.2L732.3,786.4L729.4,770.2L738.8,769.0Z" fill="#47c532" stroke="#47c532" stroke-width="0.7"/>
<path d="M735.1,786.1L725.1,787.2L722.7,770.9L732.1,769.9Z" fill="#47c532" stroke="#47c532" stroke-width="0.7"/>
<path d="M727.9,786.9L717.9,787.8L715.9,771.5L725.3,770.6Z" fill="#47c532" stroke="#47c532" stroke-width="0.7"/>
<path d="M720.8,787.6L710.7,788.4L709.1,772.0L718.6,771.3Z" fill="#47c532" stroke="#47c532" stroke-width="0.7"/>
<path d="M713.6,788.2L703.5,788.8L702.2,772.4L711.8,771.8Z" fill="#47c532" stroke="#47c532" stroke-width="0.7"/>
<path d="M706.3,788.6L696.2,789.1L695.4,772.7L705.0,772.3Z" fill="#47c632" stroke="#47c632" stroke-width="0.7"/>
<path d="M699.1,789.0L689.0,789.3L688.5,772.9L698.1,772.6Z" fill="#47c632" stroke="#47c632" stroke-width="0.7"/>
<path d="M691.8,789.2L681.7,789.4L681.7,773.0L691.3,772.8Z" fill="#47c632" stroke="#47c632" stroke-width="0.7"/>
<path d="M684.6,789.4L674.4,789.4L674.8,773.0L684.4,773.0Z" fill="#47c632" stroke="#47c632" stroke-width="0.7"/>
<path d="M677.3,789.4L667.2,789.2L668.0,772.8L677.5,773.0Z" fill="#47c632" stroke="#47c632" stroke-width="0.7"/>
<path d="M670.0,789.3L659.9,789.0L661.1,772.6L670.7,772.9Z" fill="#47c632" stroke="#47c632" stroke-width="0.7"/>
<path d="M662.8,789.1L652.6,788.6L654.3,772.3L663.8,772.7Z" fill="#47c632" stroke="#47c632" stroke-width="0.7"/></g></g></g>
<path d="M201.2,557.7L191.8,552.0L182.9,546.1L174.7,539.9L166.9,533.5L159.8,526.8L153.3,519.9L147.5,512.9L142.3,505.7L137.7,498.3L133.9,490.9L130.7,483.3L128.2,475.6L126.4,467.9L125.4,460.1L125.0,452.3L125.4,444.5L126.4,436.7L128.2,429.0L130.7,421.3L133.9,413.7L137.7,406.3L142.3,398.9L147.5,391.7L153.3,384.7L159.8,377.8L166.9,371.1L174.7,364.7L182.9,358.5L191.8,352.6L201.2,346.9L211.0,341.6L221.4,336.5L232.2,331.8L243.4,327.3L255.0,323.3L267.0,319.5L279.2,316.2L291.8,313.2L304.7,310.6L317.7,308.4L330.9,306.6L344.3,305.1L357.8,304.1L371.4,303.5L385.0,303.3L398.6,303.5L412.2,304.1L425.7,305.1L439.1,306.6L452.3,308.4L465.3,310.6L478.2,313.2L490.8,316.2L503.0,319.5L515.0,323.3L526.6,327.3L537.8,331.8L548.6,336.5L559.0,341.6L568.8,346.9L558.2,353.1L548.9,348.0L539.2,343.3L529.0,338.8L518.4,334.6L507.5,330.8L496.2,327.3L484.7,324.1L472.8,321.3L460.7,318.9L448.4,316.8L435.9,315.1L423.3,313.7L410.6,312.8L397.8,312.2L385.0,312.0L372.2,312.2L359.4,312.8L346.7,313.7L334.1,315.1L321.6,316.8L309.3,318.9L297.2,321.3L285.3,324.1L273.8,327.3L262.5,330.8L251.6,334.6L241.0,338.8L230.8,343.3L221.1,348.0L211.8,353.1L202.9,358.4L194.6,364.0L186.8,369.8L179.5,375.9L172.8,382.2L166.7,388.6L161.2,395.2L156.3,402.0L152.0,408.9L148.3,416.0L145.4,423.1L143.0,430.4L141.3,437.6L140.3,445.0L140.0,452.3L140.3,459.6L141.3,467.0L143.0,474.2L145.4,481.5L148.3,488.6L152.0,495.7L156.3,502.6L161.2,509.4L166.7,516.0L172.8,522.5L179.5,528.7L186.8,534.8L194.6,540.6L202.9,546.2L211.8,551.5Z" fill="#b38f88"/>
<clipPath id="cbr"><path d="M201.2,557.7L191.8,552.0L182.9,546.1L174.7,539.9L166.9,533.5L159.8,526.8L153.3,519.9L147.5,512.9L142.3,505.7L137.7,498.3L133.9,490.9L130.7,483.3L128.2,475.6L126.4,467.9L125.4,460.1L125.0,452.3L125.4,444.5L126.4,436.7L128.2,429.0L130.7,421.3L133.9,413.7L137.7,406.3L142.3,398.9L147.5,391.7L153.3,384.7L159.8,377.8L166.9,371.1L174.7,364.7L182.9,358.5L191.8,352.6L201.2,346.9L211.0,341.6L221.4,336.5L232.2,331.8L243.4,327.3L255.0,323.3L267.0,319.5L279.2,316.2L291.8,313.2L304.7,310.6L317.7,308.4L330.9,306.6L344.3,305.1L357.8,304.1L371.4,303.5L385.0,303.3L398.6,303.5L412.2,304.1L425.7,305.1L439.1,306.6L452.3,308.4L465.3,310.6L478.2,313.2L490.8,316.2L503.0,319.5L515.0,323.3L526.6,327.3L537.8,331.8L548.6,336.5L559.0,341.6L568.8,346.9L558.2,353.1L548.9,348.0L539.2,343.3L529.0,338.8L518.4,334.6L507.5,330.8L496.2,327.3L484.7,324.1L472.8,321.3L460.7,318.9L448.4,316.8L435.9,315.1L423.3,313.7L410.6,312.8L397.8,312.2L385.0,312.0L372.2,312.2L359.4,312.8L346.7,313.7L334.1,315.1L321.6,316.8L309.3,318.9L297.2,321.3L285.3,324.1L273.8,327.3L262.5,330.8L251.6,334.6L241.0,338.8L230.8,343.3L221.1,348.0L211.8,353.1L202.9,358.4L194.6,364.0L186.8,369.8L179.5,375.9L172.8,382.2L166.7,388.6L161.2,395.2L156.3,402.0L152.0,408.9L148.3,416.0L145.4,423.1L143.0,430.4L141.3,437.6L140.3,445.0L140.0,452.3L140.3,459.6L141.3,467.0L143.0,474.2L145.4,481.5L148.3,488.6L152.0,495.7L156.3,502.6L161.2,509.4L166.7,516.0L172.8,522.5L179.5,528.7L186.8,534.8L194.6,540.6L202.9,546.2L211.8,551.5Z"/></clipPath>
<g clip-path="url(#cbr)"><path d="M244.5,567.2L234.1,562.8L224.1,558.1L214.5,553.1L205.5,547.8L196.9,542.2L188.9,536.4L181.4,530.3L174.5,524.1L168.1,517.6L162.4,510.9L157.3,504.1L152.8,497.1L149.0,490.0L145.9,482.8L143.4,475.6L141.6,468.2L140.5,460.8L140.0,453.4L140.2,446.0L141.2,438.6L142.8,431.2L145.1,423.9L148.0,416.7L151.6,409.6L155.9,402.6L160.8,395.7L166.4,389.0L172.5,382.5L179.2,376.1L186.6,370.0L194.4,364.1L202.8,358.5L211.8,353.1L221.2,348.0L231.0,343.2L241.3,338.7L252.0,334.5L263.1,330.6L274.5,327.1L286.2,323.9L298.2,321.1L310.4,318.7L322.8,316.6L335.5,314.9L348.2,313.6L361.1,312.7L374.0,312.1L386.9,312.0L399.9,312.3L412.8,312.9L425.6,313.9L438.3,315.4L450.9,317.2L463.3,319.4L475.5,321.9L487.4,324.8L499.0,328.1L510.3,331.7L521.2,335.7L531.8,340.0L542.0,344.6L551.7,349.5L561.0,354.7L569.7,360.1L578.0,365.9L585.7,371.8" fill="none" stroke="#7a5c56" stroke-width="9" stroke-opacity="0.4" filter="url(#blur3)"/></g>
<path d="M863.1,514.4L872.4,520.1L881.3,526.2L889.5,532.5L897.2,539.0L904.3,545.8L910.8,552.7L916.7,559.9L921.9,567.2L926.4,574.7L930.3,582.3L933.4,590.0L935.9,597.8L937.7,605.7L938.7,613.6L939.1,621.5L938.7,629.4L937.7,637.3L935.9,645.2L933.4,653.0L930.3,660.7L926.4,668.3L921.9,675.8L916.7,683.1L910.8,690.3L904.3,697.2L897.2,704.0L889.5,710.5L881.3,716.8L872.4,722.9L863.1,728.6L853.2,734.1L842.9,739.2L832.1,744.1L820.9,748.6L809.4,752.7L797.4,756.5L785.1,759.9L772.6,762.9L759.8,765.6L746.8,767.8L733.6,769.7L720.2,771.1L706.7,772.2L693.2,772.8L679.6,773.0L666.0,772.8L652.5,772.2L639.0,771.1L625.6,769.7L612.4,767.8L599.4,765.6L586.6,762.9L574.1,759.9L561.8,756.5L549.9,752.7L538.3,748.6L527.1,744.1L516.3,739.2L506.0,734.1L496.1,728.6L508.1,720.2L517.3,725.3L526.9,730.1L537.0,734.6L547.5,738.8L558.3,742.6L569.5,746.1L580.9,749.3L592.7,752.1L604.6,754.6L616.8,756.7L629.2,758.4L641.6,759.8L654.2,760.7L666.9,761.3L679.6,761.5L692.3,761.3L705.0,760.7L717.6,759.8L730.0,758.4L742.4,756.7L754.6,754.6L766.5,752.1L778.3,749.3L789.7,746.1L800.9,742.6L811.7,738.8L822.2,734.6L832.3,730.1L841.9,725.3L851.1,720.2L859.9,714.8L868.1,709.2L875.9,703.4L883.1,697.3L889.7,691.0L895.8,684.5L901.2,677.8L906.1,671.0L910.3,664.1L913.9,657.0L916.9,649.8L919.2,642.6L920.9,635.2L921.9,627.9L922.2,620.5L921.9,613.1L920.9,605.8L919.2,598.4L916.9,591.2L913.9,584.0L910.3,576.9L906.1,570.0L901.2,563.2L895.8,556.5L889.7,550.0L883.1,543.7L875.9,537.6L868.1,531.8L859.9,526.2L851.1,520.8Z" fill="#80fff4"/>
<path d="M211.8,551.5L202.9,546.2L194.6,540.6L186.8,534.8L179.5,528.7L172.8,522.5L166.7,516.0L161.2,509.4L156.3,502.6L152.0,495.7L148.3,488.6L145.4,481.5L143.0,474.2L141.3,467.0L140.3,459.6L140.0,452.3L140.3,445.0L141.3,437.6L143.0,430.4L145.4,423.1L148.3,416.0L152.0,408.9L156.3,402.0L161.2,395.2L166.7,388.6L172.8,382.2L179.5,375.9L186.8,369.8L194.6,364.0L202.9,358.4L211.8,353.1L221.1,348.0L230.8,343.3L241.0,338.8L251.6,334.6L262.5,330.8L273.8,327.3L285.3,324.1L297.2,321.3L309.3,318.9L321.6,316.8L334.1,315.1L346.7,313.7L359.4,312.8L372.2,312.2L385.0,312.0L397.8,312.2L410.6,312.8L423.3,313.7L435.9,315.1L448.4,316.8L460.7,318.9L472.8,321.3L484.7,324.1L496.2,327.3L507.5,330.8L518.4,334.6L529.0,338.8L539.2,343.3L548.9,348.0L558.2,353.1L851.1,520.8L859.9,526.2L868.1,531.8L875.9,537.6L883.1,543.7L889.7,550.0L895.8,556.5L901.2,563.2L906.1,570.0L910.3,576.9L913.9,584.0L916.9,591.2L919.2,598.4L920.9,605.8L921.9,613.1L922.2,620.5L921.9,627.9L920.9,635.2L919.2,642.6L916.9,649.8L913.9,657.0L910.3,664.1L906.1,671.0L901.2,677.8L895.8,684.5L889.7,691.0L883.1,697.3L875.9,703.4L868.1,709.2L859.9,714.8L851.1,720.2L841.9,725.3L832.3,730.1L822.2,734.6L811.7,738.8L800.9,742.6L789.7,746.1L778.3,749.3L766.5,752.1L754.6,754.6L742.4,756.7L730.0,758.4L717.6,759.8L705.0,760.7L692.3,761.3L679.6,761.5L666.9,761.3L654.2,760.7L641.6,759.8L629.2,758.4L616.8,756.7L604.6,754.6L592.7,752.1L580.9,749.3L569.5,746.1L558.3,742.6L547.5,738.8L537.0,734.6L526.9,730.1L517.3,725.3L508.1,720.2Z" fill="url(#gin)"/>
<g clip-path="url(#cin)">
 <path d="M211.8,551.5L202.9,546.2L194.6,540.6L186.8,534.8L179.5,528.7L172.8,522.5L166.7,516.0L161.2,509.4L156.3,502.6L152.0,495.7L148.3,488.6L145.4,481.5L143.0,474.2L141.3,467.0L140.3,459.6L140.0,452.3L140.3,445.0L141.3,437.6L143.0,430.4L145.4,423.1L148.3,416.0L152.0,408.9L156.3,402.0L161.2,395.2L166.7,388.6L172.8,382.2L179.5,375.9L186.8,369.8L194.6,364.0L202.9,358.4L211.8,353.1L221.1,348.0L230.8,343.3L241.0,338.8L251.6,334.6L262.5,330.8L273.8,327.3L285.3,324.1L297.2,321.3L309.3,318.9L321.6,316.8L334.1,315.1L346.7,313.7L359.4,312.8L372.2,312.2L385.0,312.0L397.8,312.2L410.6,312.8L423.3,313.7L435.9,315.1L448.4,316.8L460.7,318.9L472.8,321.3L484.7,324.1L496.2,327.3L507.5,330.8L518.4,334.6L529.0,338.8L539.2,343.3L548.9,348.0L558.2,353.1L851.1,520.8L859.9,526.2L868.1,531.8L875.9,537.6L883.1,543.7L889.7,550.0L895.8,556.5L901.2,563.2L906.1,570.0L910.3,576.9L913.9,584.0L916.9,591.2L919.2,598.4L920.9,605.8L921.9,613.1L922.2,620.5L921.9,627.9L920.9,635.2L919.2,642.6L916.9,649.8L913.9,657.0L910.3,664.1L906.1,671.0L901.2,677.8L895.8,684.5L889.7,691.0L883.1,697.3L875.9,703.4L868.1,709.2L859.9,714.8L851.1,720.2L841.9,725.3L832.3,730.1L822.2,734.6L811.7,738.8L800.9,742.6L789.7,746.1L778.3,749.3L766.5,752.1L754.6,754.6L742.4,756.7L730.0,758.4L717.6,759.8L705.0,760.7L692.3,761.3L679.6,761.5L666.9,761.3L654.2,760.7L641.6,759.8L629.2,758.4L616.8,756.7L604.6,754.6L592.7,752.1L580.9,749.3L569.5,746.1L558.3,742.6L547.5,738.8L537.0,734.6L526.9,730.1L517.3,725.3L508.1,720.2Z" fill="none" stroke="url(#rsv)" stroke-width="14" stroke-opacity="0.38" filter="url(#blur6)"/>
 <path d="M211.8,551.5L202.9,546.2L194.6,540.6L186.8,534.8L179.5,528.7L172.8,522.5L166.7,516.0L161.2,509.4L156.3,502.6L152.0,495.7L148.3,488.6L145.4,481.5L143.0,474.2L141.3,467.0L140.3,459.6L140.0,452.3L140.3,445.0L141.3,437.6L143.0,430.4L145.4,423.1L148.3,416.0L152.0,408.9L156.3,402.0L161.2,395.2L166.7,388.6L172.8,382.2L179.5,375.9L186.8,369.8L194.6,364.0L202.9,358.4L211.8,353.1L221.1,348.0L230.8,343.3L241.0,338.8L251.6,334.6L262.5,330.8L273.8,327.3L285.3,324.1L297.2,321.3L309.3,318.9L321.6,316.8L334.1,315.1L346.7,313.7L359.4,312.8L372.2,312.2L385.0,312.0L397.8,312.2L410.6,312.8L423.3,313.7L435.9,315.1L448.4,316.8L460.7,318.9L472.8,321.3L484.7,324.1L496.2,327.3L507.5,330.8L518.4,334.6L529.0,338.8L539.2,343.3L548.9,348.0L558.2,353.1L851.1,520.8L859.9,526.2L868.1,531.8L875.9,537.6L883.1,543.7L889.7,550.0L895.8,556.5L901.2,563.2L906.1,570.0L910.3,576.9L913.9,584.0L916.9,591.2L919.2,598.4L920.9,605.8L921.9,613.1L922.2,620.5L921.9,627.9L920.9,635.2L919.2,642.6L916.9,649.8L913.9,657.0L910.3,664.1L906.1,671.0L901.2,677.8L895.8,684.5L889.7,691.0L883.1,697.3L875.9,703.4L868.1,709.2L859.9,714.8L851.1,720.2L841.9,725.3L832.3,730.1L822.2,734.6L811.7,738.8L800.9,742.6L789.7,746.1L778.3,749.3L766.5,752.1L754.6,754.6L742.4,756.7L730.0,758.4L717.6,759.8L705.0,760.7L692.3,761.3L679.6,761.5L666.9,761.3L654.2,760.7L641.6,759.8L629.2,758.4L616.8,756.7L604.6,754.6L592.7,752.1L580.9,749.3L569.5,746.1L558.3,742.6L547.5,738.8L537.0,734.6L526.9,730.1L517.3,725.3L508.1,720.2Z" fill="none" stroke="url(#rsv)" stroke-width="44" stroke-opacity="0.4" filter="url(#blur15)"/>
 <path d="M211.8,551.5L202.9,546.2L194.6,540.6L186.8,534.8L179.5,528.7L172.8,522.5L166.7,516.0L161.2,509.4L156.3,502.6L152.0,495.7L148.3,488.6L145.4,481.5L143.0,474.2L141.3,467.0L140.3,459.6L140.0,452.3L140.3,445.0L141.3,437.6L143.0,430.4L145.4,423.1L148.3,416.0L152.0,408.9L156.3,402.0L161.2,395.2L166.7,388.6L172.8,382.2L179.5,375.9L186.8,369.8L194.6,364.0L202.9,358.4L211.8,353.1L221.1,348.0L230.8,343.3L241.0,338.8L251.6,334.6L262.5,330.8L273.8,327.3L285.3,324.1L297.2,321.3L309.3,318.9L321.6,316.8L334.1,315.1L346.7,313.7L359.4,312.8L372.2,312.2L385.0,312.0L397.8,312.2L410.6,312.8L423.3,313.7L435.9,315.1L448.4,316.8L460.7,318.9L472.8,321.3L484.7,324.1L496.2,327.3L507.5,330.8L518.4,334.6L529.0,338.8L539.2,343.3L548.9,348.0L558.2,353.1L851.1,520.8L859.9,526.2L868.1,531.8L875.9,537.6L883.1,543.7L889.7,550.0L895.8,556.5L901.2,563.2L906.1,570.0L910.3,576.9L913.9,584.0L916.9,591.2L919.2,598.4L920.9,605.8L921.9,613.1L922.2,620.5L921.9,627.9L920.9,635.2L919.2,642.6L916.9,649.8L913.9,657.0L910.3,664.1L906.1,671.0L901.2,677.8L895.8,684.5L889.7,691.0L883.1,697.3L875.9,703.4L868.1,709.2L859.9,714.8L851.1,720.2L841.9,725.3L832.3,730.1L822.2,734.6L811.7,738.8L800.9,742.6L789.7,746.1L778.3,749.3L766.5,752.1L754.6,754.6L742.4,756.7L730.0,758.4L717.6,759.8L705.0,760.7L692.3,761.3L679.6,761.5L666.9,761.3L654.2,760.7L641.6,759.8L629.2,758.4L616.8,756.7L604.6,754.6L592.7,752.1L580.9,749.3L569.5,746.1L558.3,742.6L547.5,738.8L537.0,734.6L526.9,730.1L517.3,725.3L508.1,720.2Z" fill="none" stroke="url(#rsv)" stroke-width="110" stroke-opacity="0.3" filter="url(#blur22)"/>
 <ellipse cx="400" cy="440" rx="190" ry="45" transform="rotate(12 400 440)" fill="url(#rsh3)"/>
</g>
<path d="M146.4,626.5L134.3,619.1L122.9,611.5L112.2,603.4L102.2,595.1L93.0,586.5L84.6,577.6L77.0,568.5L70.3,559.2L64.4,549.6L59.4,540.0L55.3,530.1L52.1,520.2L49.8,510.2L48.5,500.1L48.0,490.0L48.5,479.9L49.8,469.8L52.1,459.8L55.3,449.9L59.4,440.0L64.4,430.4L70.3,420.8L77.0,411.5L84.6,402.4L93.0,393.5L102.2,384.9L112.2,376.6L122.9,368.5L134.3,360.9L146.4,353.5L159.2,346.6L172.5,340.0L186.5,333.9L201.0,328.1L216.0,322.9L231.5,318.0L247.3,313.7L263.6,309.8L280.2,306.4L297.0,303.6L314.1,301.2L331.4,299.4L348.9,298.1L366.4,297.3L384.0,297.0L401.6,297.3L419.1,298.1L436.6,299.4L453.9,301.2L471.0,303.6L487.8,306.4L504.4,309.8L520.7,313.7L536.5,318.0L552.0,322.9L567.0,328.1L581.5,333.9L595.5,340.0L608.8,346.6L621.6,353.5L917.3,522.1L929.4,529.5L940.9,537.3L951.6,545.4L961.6,553.8L970.9,562.5L979.3,571.5L986.9,580.7L993.6,590.1L999.5,599.7L1004.5,609.5L1008.6,619.5L1011.9,629.5L1014.2,639.6L1015.5,649.8L1016.0,660.0L1015.5,670.2L1014.2,680.4L1011.9,690.5L1008.6,700.5L1004.5,710.5L999.5,720.3L993.6,729.9L986.9,739.3L979.3,748.5L970.9,757.5L961.6,766.2L951.6,774.6L940.9,782.7L929.4,790.5L917.3,797.9L904.5,804.9L891.1,811.5L877.1,817.8L862.5,823.5L847.5,828.9L832.0,833.7L816.1,838.1L799.8,842.0L783.1,845.5L766.2,848.4L749.1,850.7L731.7,852.6L714.2,853.9L696.6,854.7L679.0,855.0L661.4,854.7L643.8,853.9L626.3,852.6L608.9,850.7L591.8,848.4L574.9,845.5L558.2,842.0L541.9,838.1L526.0,833.7L510.5,828.9L495.5,823.5L480.9,817.8L466.9,811.5L453.5,804.9L440.7,797.9Z M201.2,557.7L191.8,552.0L182.9,546.1L174.7,539.9L166.9,533.5L159.8,526.8L153.3,519.9L147.5,512.9L142.3,505.7L137.7,498.3L133.9,490.9L130.7,483.3L128.2,475.6L126.4,467.9L125.4,460.1L125.0,452.3L125.4,444.5L126.4,436.7L128.2,429.0L130.7,421.3L133.9,413.7L137.7,406.3L142.3,398.9L147.5,391.7L153.3,384.7L159.8,377.8L166.9,371.1L174.7,364.7L182.9,358.5L191.8,352.6L201.2,346.9L211.0,341.6L221.4,336.5L232.2,331.8L243.4,327.3L255.0,323.3L267.0,319.5L279.2,316.2L291.8,313.2L304.7,310.6L317.7,308.4L330.9,306.6L344.3,305.1L357.8,304.1L371.4,303.5L385.0,303.3L398.6,303.5L412.2,304.1L425.7,305.1L439.1,306.6L452.3,308.4L465.3,310.6L478.2,313.2L490.8,316.2L503.0,319.5L515.0,323.3L526.6,327.3L537.8,331.8L548.6,336.5L559.0,341.6L568.8,346.9L863.1,514.4 M496.1,728.6L201.2,557.7 M211.8,551.5L202.9,546.2L194.6,540.6L186.8,534.8L179.5,528.7L172.8,522.5L166.7,516.0L161.2,509.4L156.3,502.6L152.0,495.7L148.3,488.6L145.4,481.5L143.0,474.2L141.3,467.0L140.3,459.6L140.0,452.3L140.3,445.0L141.3,437.6L143.0,430.4L145.4,423.1L148.3,416.0L152.0,408.9L156.3,402.0L161.2,395.2L166.7,388.6L172.8,382.2L179.5,375.9L186.8,369.8L194.6,364.0L202.9,358.4L211.8,353.1L221.1,348.0L230.8,343.3L241.0,338.8L251.6,334.6L262.5,330.8L273.8,327.3L285.3,324.1L297.2,321.3L309.3,318.9L321.6,316.8L334.1,315.1L346.7,313.7L359.4,312.8L372.2,312.2L385.0,312.0L397.8,312.2L410.6,312.8L423.3,313.7L435.9,315.1L448.4,316.8L460.7,318.9L472.8,321.3L484.7,324.1L496.2,327.3L507.5,330.8L518.4,334.6L529.0,338.8L539.2,343.3L548.9,348.0L558.2,353.1L851.1,520.8 M508.1,720.2L211.8,551.5 M146.4,626.5L201.2,557.7 M621.6,353.5L568.8,346.9 M146.4,353.5L205.4,346.4 M917.3,797.9L863.1,728.6 M568.8,346.9L558.2,353.1 M201.2,557.7L211.8,551.5" fill="none" stroke="#fff" stroke-width="2"/>
<path d="M863.1,514.4L872.4,520.1L881.3,526.2L889.5,532.5L897.2,539.0L904.3,545.8L910.8,552.7L916.7,559.9L921.9,567.2L926.4,574.7L930.3,582.3L933.4,590.0L935.9,597.8L937.7,605.7L938.7,613.6L939.1,621.5L938.7,629.4L937.7,637.3L935.9,645.2L933.4,653.0L930.3,660.7L926.4,668.3L921.9,675.8L916.7,683.1L910.8,690.3L904.3,697.2L897.2,704.0L889.5,710.5L881.3,716.8L872.4,722.9L863.1,728.6L853.2,734.1L842.9,739.2L832.1,744.1L820.9,748.6L809.4,752.7L797.4,756.5L785.1,759.9L772.6,762.9L759.8,765.6L746.8,767.8L733.6,769.7L720.2,771.1L706.7,772.2L693.2,772.8L679.6,773.0L666.0,772.8L652.5,772.2L639.0,771.1L625.6,769.7L612.4,767.8L599.4,765.6L586.6,762.9L574.1,759.9L561.8,756.5L549.9,752.7L538.3,748.6L527.1,744.1L516.3,739.2L506.0,734.1L496.1,728.6 M851.1,520.8L859.9,526.2L868.1,531.8L875.9,537.6L883.1,543.7L889.7,550.0L895.8,556.5L901.2,563.2L906.1,570.0L910.3,576.9L913.9,584.0L916.9,591.2L919.2,598.4L920.9,605.8L921.9,613.1L922.2,620.5L921.9,627.9L920.9,635.2L919.2,642.6L916.9,649.8L913.9,657.0L910.3,664.1L906.1,671.0L901.2,677.8L895.8,684.5L889.7,691.0L883.1,697.3L875.9,703.4L868.1,709.2L859.9,714.8L851.1,720.2L841.9,725.3L832.3,730.1L822.2,734.6L811.7,738.8L800.9,742.6L789.7,746.1L778.3,749.3L766.5,752.1L754.6,754.6L742.4,756.7L730.0,758.4L717.6,759.8L705.0,760.7L692.3,761.3L679.6,761.5L666.9,761.3L654.2,760.7L641.6,759.8L629.2,758.4L616.8,756.7L604.6,754.6L592.7,752.1L580.9,749.3L569.5,746.1L558.3,742.6L547.5,738.8L537.0,734.6L526.9,730.1L517.3,725.3L508.1,720.2 M496.1,728.6L508.1,720.2 M863.1,514.4L851.1,520.8" fill="none" stroke="#5cf070" stroke-width="1.7"/>
<path d="M865.3,515.7L866.4,516.3L867.4,516.9 M872.6,520.2L873.5,520.8L874.5,521.5 M879.5,524.9L880.4,525.6L881.4,526.2 M886.1,529.7L887.0,530.4L887.8,531.1 M892.3,534.7L893.2,535.4L894.0,536.1 M898.2,539.9L899.0,540.6L899.8,541.3 M903.7,545.1L904.5,545.9L905.2,546.6 M908.9,550.5L909.6,551.3L910.2,552.1 M913.7,556.1L914.3,556.8L914.9,557.6 M918.0,561.7L918.6,562.5L919.2,563.3 M922.0,567.4L922.5,568.2L923.0,569.0 M925.6,573.3L926.1,574.1L926.5,574.9 M928.8,579.2L929.2,580.0L929.6,580.8 M931.5,585.1L931.9,586.0L932.2,586.8 M933.8,591.2L934.1,592.0L934.4,592.8 M935.8,597.2L936.0,598.1L936.2,598.9 M937.2,603.4L937.4,604.2L937.6,605.1 M938.3,609.5L938.4,610.4L938.5,611.2 M938.9,615.7L939.0,616.6L939.0,617.4 M939.1,621.9L939.1,622.7L939.1,623.6 M938.9,628.1L938.8,628.9L938.7,629.8 M938.2,634.2L938.1,635.1L937.9,635.9 M937.1,640.4L936.9,641.2L936.7,642.1 M935.5,646.5L935.3,647.3L935.0,648.2 M933.6,652.6L933.3,653.4L933.0,654.3 M931.2,658.6L930.8,659.4L930.5,660.3 M928.4,664.6L928.0,665.4L927.5,666.2 M925.2,670.5L924.7,671.3L924.2,672.1 M921.5,676.3L921.0,677.1L920.5,677.9 M917.5,682.0L916.9,682.8L916.3,683.6 M913.1,687.6L912.4,688.4L911.8,689.1 M908.3,693.1L907.6,693.9L906.9,694.6 M903.1,698.5L902.3,699.2L901.6,700.0 M897.5,703.8L896.7,704.5L895.9,705.2 M891.6,708.9L890.7,709.6L889.9,710.3 M885.3,713.9L884.4,714.5L883.5,715.2 M878.7,718.7L877.7,719.3L876.8,720.0 M871.7,723.4L870.7,724.0L869.7,724.6 M864.4,727.8L863.4,728.5L862.3,729.1 M856.8,732.2L855.8,732.7L854.7,733.3 M849.0,736.3L847.8,736.8L846.7,737.4 M840.8,740.2L839.6,740.8L838.5,741.3 M832.4,744.0L831.2,744.5L830.0,745.0 M823.7,747.5L822.4,748.0L821.2,748.5 M814.7,750.8L813.5,751.3L812.2,751.7 M805.6,753.9L804.3,754.4L803.0,754.8 M796.2,756.8L794.9,757.2L793.6,757.6 M786.7,759.5L785.3,759.9L784.0,760.2 M776.9,761.9L775.6,762.3L774.2,762.6 M767.0,764.1L765.6,764.4L764.2,764.7 M757.0,766.1L755.6,766.4L754.2,766.6 M746.8,767.8L745.4,768.1L744.0,768.3 M736.5,769.3L735.1,769.5L733.6,769.7 M726.1,770.5L724.7,770.7L723.2,770.8 M715.7,771.5L714.2,771.6L712.8,771.8 M705.2,772.3L703.7,772.3L702.2,772.4 M694.6,772.7L693.1,772.8L691.7,772.8 M684.0,773.0L682.5,773.0L681.1,773.0 M673.4,773.0L672.0,772.9L670.5,772.9 M662.8,772.7L661.4,772.6L659.9,772.6 M652.3,772.2L650.8,772.1L649.4,772.0 M641.8,771.4L640.3,771.3L638.9,771.1 M631.3,770.4L629.9,770.2L628.4,770.0 M621.0,769.1L619.5,768.9L618.1,768.7 M610.7,767.6L609.3,767.3L607.9,767.1 M600.5,765.8L599.1,765.5L597.7,765.3 M590.5,763.8L589.1,763.5L587.8,763.2 M580.6,761.6L579.3,761.2L577.9,760.9 M570.9,759.1L569.6,758.7L568.3,758.4 M561.4,756.4L560.1,756.0L558.8,755.6 M552.1,753.4L550.8,753.0L549.5,752.6 M543.0,750.3L541.7,749.8L540.5,749.4 M534.1,746.9L532.9,746.5L531.7,746.0 M525.4,743.4L524.2,742.9L523.1,742.3 M517.0,739.6L515.9,739.1L514.8,738.5 M508.9,735.6L507.8,735.1L506.7,734.5 M501.1,731.5L500.0,730.9L499.0,730.3 M853.4,522.1L854.4,522.7L855.4,523.3 M860.6,526.6L861.6,527.3L862.5,527.9 M867.5,531.3L868.4,532.0L869.3,532.6 M874.0,536.1L874.9,536.8L875.7,537.5 M880.2,541.2L881.0,541.9L881.8,542.6 M885.9,546.3L886.7,547.1L887.4,547.8 M891.3,551.6L892.0,552.4L892.7,553.1 M896.3,557.1L896.9,557.8L897.6,558.6 M900.8,562.6L901.4,563.4L902.0,564.2 M905.0,568.3L905.5,569.1L906.0,569.9 M908.7,574.1L909.1,574.9L909.6,575.7 M911.9,579.9L912.4,580.7L912.8,581.6 M914.8,585.8L915.1,586.7L915.5,587.5 M917.1,591.8L917.4,592.7L917.7,593.5 M919.1,597.9L919.3,598.7L919.5,599.6 M920.5,604.0L920.7,604.8L920.9,605.7 M921.5,610.1L921.6,611.0L921.7,611.8 M922.1,616.3L922.1,617.1L922.2,618.0 M922.2,622.4L922.2,623.3L922.1,624.1 M921.8,628.6L921.7,629.4L921.6,630.3 M921.0,634.7L920.8,635.6L920.6,636.4 M919.7,640.8L919.4,641.7L919.2,642.5 M917.9,646.9L917.6,647.7L917.3,648.6 M915.7,652.9L915.4,653.8L915.0,654.6 M913.0,658.9L912.6,659.7L912.2,660.5 M909.9,664.8L909.5,665.6L909.0,666.4 M906.4,670.6L905.9,671.4L905.3,672.2 M902.4,676.3L901.8,677.1L901.2,677.8 M898.0,681.9L897.4,682.6L896.7,683.4 M893.2,687.4L892.5,688.1L891.8,688.9 M888.0,692.7L887.2,693.4L886.4,694.2 M882.3,697.9L881.5,698.6L880.7,699.4 M876.3,703.0L875.5,703.7L874.6,704.4 M869.9,707.9L869.0,708.6L868.1,709.3 M863.2,712.7L862.2,713.3L861.3,713.9 M856.1,717.2L855.1,717.9L854.1,718.5 M848.7,721.6L847.6,722.2L846.5,722.8 M840.9,725.8L839.8,726.4L838.7,726.9 M832.8,729.8L831.7,730.3L830.6,730.9 M824.5,733.6L823.3,734.1L822.1,734.6 M815.9,737.2L814.6,737.6L813.4,738.1 M807.0,740.5L805.7,740.9L804.5,741.4 M797.8,743.6L796.6,744.0L795.3,744.4 M788.5,746.5L787.2,746.9L785.8,747.3 M778.9,749.1L777.6,749.5L776.2,749.8 M769.2,751.5L767.8,751.9L766.4,752.2 M759.2,753.7L757.8,754.0L756.4,754.2 M749.1,755.6L747.7,755.8L746.3,756.1 M738.9,757.2L737.5,757.4L736.1,757.6 M728.6,758.6L727.2,758.8L725.7,758.9 M718.2,759.7L716.7,759.8L715.3,760.0 M707.7,760.6L706.2,760.6L704.8,760.7 M697.1,761.1L695.7,761.2L694.2,761.2 M686.6,761.4L685.1,761.5L683.6,761.5 M676.0,761.5L674.5,761.5L673.0,761.4 M665.4,761.3L663.9,761.2L662.5,761.1 M654.8,760.8L653.4,760.7L651.9,760.6 M644.3,760.0L642.9,759.9L641.4,759.7 M633.9,759.0L632.4,758.8L631.0,758.6 M623.5,757.7L622.1,757.5L620.7,757.3 M613.3,756.1L611.9,755.9L610.4,755.7 M603.1,754.3L601.8,754.0L600.4,753.8 M593.2,752.2L591.8,751.9L590.4,751.6 M583.4,749.9L582.0,749.6L580.7,749.2 M573.7,747.4L572.4,747.0L571.1,746.6 M564.3,744.6L563.0,744.1L561.7,743.7 M555.1,741.5L553.8,741.1L552.6,740.6 M546.1,738.2L544.9,737.8L543.7,737.3 M537.4,734.7L536.2,734.2L535.0,733.7 M529.0,731.0L527.8,730.5L526.7,730.0 M520.8,727.1L519.7,726.5L518.6,726.0 M512.9,723.0L511.9,722.4L510.8,721.8" fill="none" stroke="#ffffff" stroke-width="1.7"/>
<g fill="none" stroke="#f4f4f4" stroke-linecap="round">
 <path d="M205.4,346.4 C222,364 250,400 277,414" stroke-width="1.5"/>
 <path d="M857,722.5 L863,729.5" stroke-width="1.8"/>
</g>
<g fill="#f4f4f4">
 <path d="M620.8,607.8 L636.4,617.4 L663.1,632.3 L696.1,648.4 L729.9,662.8 L729.9,662.6 L696.8,647.0 L664.0,630.5 L637.0,616.3 L620.8,607.6Z"/><path d="M749.4,671.9 L781.3,687.8 L824.3,708.4 L856.7,723.3 L857.5,721.7 L825.0,706.9 L781.7,686.9 L749.4,671.7Z"/>
 <circle cx="205.4" cy="346.4" r="2"/><circle cx="277" cy="414" r="1.6"/><circle cx="146.3" cy="352.5" r="1.5"/>
 <circle cx="857.5" cy="722.5" r="1.8"/><circle cx="918" cy="798.5" r="1.6"/>
</g>
<defs>
 <linearGradient id="ib" x1="0" y1="0" x2="1" y2="1"><stop offset="0" stop-color="#86b0e4"/><stop offset="1" stop-color="#2a579c"/></linearGradient>
 <linearGradient id="ibr" x1="0" y1="0" x2="1" y2="0"><stop offset="0" stop-color="#2a579c"/><stop offset="1" stop-color="#6e9ed8"/></linearGradient>
 <linearGradient id="ib2" x1="0" y1="0" x2="1" y2="0"><stop offset="0" stop-color="#6a9ad6"/><stop offset="1" stop-color="#2c5a9c"/></linearGradient>
 <linearGradient id="ibv" x1="0" y1="0" x2="0" y2="1"><stop offset="0" stop-color="#7eaae0"/><stop offset="1" stop-color="#3466ac"/></linearGradient>
 <linearGradient id="ir" x1="0" y1="0" x2="1" y2="1"><stop offset="0" stop-color="#f03030"/><stop offset="1" stop-color="#b80c0c"/></linearGradient>
 <linearGradient id="irv" x1="0" y1="0" x2="0" y2="1"><stop offset="0" stop-color="#f22a2a"/><stop offset="1" stop-color="#b81010"/></linearGradient>
 <linearGradient id="ig" x1="0" y1="0" x2="0" y2="1"><stop offset="0" stop-color="#8ae83a"/><stop offset="1" stop-color="#5cb01c"/></linearGradient>
 <radialGradient id="iy" cx="0.4" cy="0.3" r="0.75"><stop offset="0" stop-color="#fbe96a"/><stop offset="1" stop-color="#c4a000"/></radialGradient>
 <linearGradient id="igr" x1="0" y1="0" x2="1" y2="1"><stop offset="0" stop-color="#8a8a8a"/><stop offset="1" stop-color="#737373"/></linearGradient>
 <linearGradient id="iinfo" x1="0" y1="0" x2="0" y2="1"><stop offset="0" stop-color="#1eb0f6"/><stop offset="1" stop-color="#1a7ce8"/></linearGradient>
 <g id="zebra">
  <path d="M0.5,0.5 Q13,-0.3 25.5,0.3 Q26.5,13 25.8,26 Q13,26.8 -0.3,26 Q0.6,13 0.5,0.5Z" fill="#b9b9e4" stroke="#e4ece8" stroke-width="0.9"/>
  <path d="M0.5,0.5 Q13,-0.3 25.5,0.3 Q26.5,13 25.8,26 Q13,26.8 -0.3,26 Q0.6,13 0.5,0.5Z" fill="none" stroke="#223" stroke-width="0.3" transform="translate(0,0.2)"/>
  <g fill="#000">
   <path d="M4.2,1.2 L6.2,1.2 Q6,7 3.4,11.8 L2.6,11 Q4.6,6 4.2,1.2Z"/>
   <path d="M7.6,1.2 L9.3,1.2 Q8.8,12 2.8,20.6 L1.9,19.6 Q7.4,11 7.6,1.2Z"/>
   <path d="M10.6,1.2 L12.2,1.2 Q11.4,15 3.8,24.5 L2.7,23.6 Q10,14 10.6,1.2Z"/>
   <path d="M13.6,1.2 L15.3,1.2 Q15,15 7.4,25.3 L6,25 Q13.5,14 13.6,1.2Z"/>
   <path d="M16.8,1.2 L19,1.2 Q20,4 21.8,8.6 Q18,12 15.5,16 Q12.5,21 10.6,25.4 L8.8,25.3 Q11.5,18 14.5,13 Q17.6,9 18.8,7.2 Q17.8,4 16.8,1.2Z"/>
   <path d="M12,25.5 Q15.5,17.5 24.8,16.8 L24.8,18.6 Q17.5,19 13.8,25.6Z"/>
   <path d="M16.4,25.8 Q19.5,21.3 24.2,20.8 L24.2,22.3 Q20.5,22.8 18.2,25.8Z"/>
   <path d="M18.6,1.6 L20.6,1.4 L24.5,4.2 L24,5.2Z"/>
  </g>
  </g>
 </g>
</defs>
<!-- left grip dots -->
<g fill="#7c7c7c">
 <rect x="14" y="49" width="1.3" height="1.3"/><rect x="18.5" y="49" width="1.3" height="1.3"/>
 <rect x="14" y="52.6" width="1.3" height="1.3"/><rect x="18.5" y="52.6" width="1.3" height="1.3"/>
 <rect x="14" y="56.1" width="1.3" height="1.3"/><rect x="18.5" y="56.1" width="1.3" height="1.3"/>
 <rect x="14" y="60.9" width="1.3" height="1.3"/><rect x="18.5" y="60.9" width="1.3" height="1.3"/>
 <rect x="14" y="64.4" width="1.3" height="1.3"/><rect x="18.5" y="64.4" width="1.3" height="1.3"/>
 <rect x="14" y="67.8" width="1.3" height="1.3"/><rect x="18.5" y="67.8" width="1.3" height="1.3"/>
</g>
<g fill="#6a6a6a">
 <rect x="910" y="49" width="1.3" height="1.3"/><rect x="914.5" y="49" width="1.3" height="1.3"/>
 <rect x="910" y="52.6" width="1.3" height="1.3"/><rect x="914.5" y="52.6" width="1.3" height="1.3"/>
 <rect x="910" y="56.1" width="1.3" height="1.3"/><rect x="914.5" y="56.1" width="1.3" height="1.3"/>
 <rect x="910" y="60.9" width="1.3" height="1.3"/><rect x="914.5" y="60.9" width="1.3" height="1.3"/>
 <rect x="910" y="64.4" width="1.3" height="1.3"/><rect x="914.5" y="64.4" width="1.3" height="1.3"/>
</g>
<!-- hovered button -->
<rect x="583" y="41" width="36" height="36" rx="3" fill="#3b3b3b" stroke="#121212" stroke-width="1.2"/>
<!-- 1 zebra -->
<use href="#zebra" x="28" y="44.5"/>
<!-- 2 fan -->
<g transform="translate(64,42)">
 <path d="M4.7,12.3 Q14.5,-7.8 29.6,15.2 L25.3,17.3 Q17.3,11.4 10.5,16.3 Z" fill="url(#ib)" stroke="#0e1a2c" stroke-width="0.7"/>
 <path d="M8,21 Q17,12 26.5,21 Q27.5,29.5 17.5,29.5 Q7,29 8,21Z" fill="#b4b4b4"/>
 <path d="M13,17 L23.8,18.3 L18.4,26.4Z" fill="#c4d6e6"/>
 <path d="M5.4,23.8 Q17.3,6 28.5,23.5" fill="none" stroke="#d81818" stroke-width="1.4"/>
 <circle cx="5.4" cy="23.8" r="1.7" fill="#f02020"/><circle cx="28.5" cy="23.5" r="1.7" fill="#f02020"/>
</g>
<!-- 3 gray surface -->
<g transform="translate(104,42)">
 <path d="M4.3,12.6 Q9,4 15.9,2.9 Q20,3.5 23.1,6.9 L13,17 Q8,14 4.3,12.6Z" fill="url(#igr)" stroke="#9a9a9a" stroke-width="0.6"/>
 <path d="M25.3,8.3 Q28.5,11 30,15.5 Q23,20 19.1,27.8 Q17,23 14.8,20.2 Z" fill="url(#igr)" stroke="#9a9a9a" stroke-width="0.6"/>
 <path d="M12.5,18.5 Q18,11 24.5,7" fill="none" stroke="#5c5c5c" stroke-width="1.3" stroke-dasharray="1 0.6"/>
 <circle cx="25.3" cy="6.9" r="1.3" fill="#7a7a7a"/><circle cx="12.3" cy="18.8" r="1.3" fill="#707070"/>
</g>
<!-- 4 sheet + cylinder -->
<g transform="translate(144,42)">
 <path d="M13.7,8.7 L13.7,4.5 Q15,2.3 17.3,2.5 L30.3,7.6 L30.3,24.5 Q26,27.5 17,26 Q14.5,25 13.7,24Z" fill="url(#ib2)" stroke="#0c1828" stroke-width="0.8"/>
 <path d="M13.7,6.5 Q14.5,2.2 17.3,2.5 L30.3,7.6 Q22,9.5 13.7,8.2Z" fill="#70a0da" stroke="#0c1828" stroke-width="0.7"/>
 <path d="M4,6.1 L15.9,11.6 L15.9,26.4 L13.7,28.9 L4,23.5Z" fill="#eeeeec"/>
 <path d="M5.4,13.7 L11.6,17 L10.8,24.6 L5.4,21.3Z" fill="none" stroke="#e41c1c" stroke-width="1.2"/>
 <circle cx="11.2" cy="15.9" r="3.6" fill="none" stroke="#e41c1c" stroke-width="1.2"/>
</g>
<!-- 5 sheet + light cylinder -->
<g transform="translate(184,42)">
 <path d="M13.7,8.7 L13.7,4.5 Q15,2.3 17.3,2.5 L30.3,7.6 L30.3,24.5 Q26,27.5 17,26 Q14.5,25 13.7,24Z" fill="#b6d0ee" stroke="#0c1828" stroke-width="0.8"/>
 <path d="M13.7,6.5 Q14.5,2.2 17.3,2.5 L30.3,7.6 Q22,9.5 13.7,8.2Z" fill="#dce8f6" stroke="#0c1828" stroke-width="0.7"/>
 <ellipse cx="23" cy="14.5" rx="5.8" ry="4" fill="none" stroke="#e41c1c" stroke-width="1.2" transform="rotate(-12 23 14.5)"/>
 <path d="M18,18 L18,24" stroke="#e41c1c" stroke-width="1.2"/>
 <path d="M4,6.1 L15.9,11.6 L15.9,26.4 L13.7,28.9 L4,23.5Z" fill="#eeeeec"/>
 <path d="M5.4,13.7 L11.6,17 L10.8,24.6 L5.4,21.3Z" fill="none" stroke="#e41c1c" stroke-width="1.2"/>
 <circle cx="11.2" cy="15.9" r="3.6" fill="none" stroke="#e41c1c" stroke-width="1.2"/>
</g>
<!-- 6 leaf -->
<g transform="translate(224,42)">
 <path d="M5,28.5 Q4.5,20 6.1,16.3 Q11,6 19.5,3.3 L29.6,3.3 Q27,11 23.1,15.5 Q17,21 14.5,25.3 L13.7,28.5 Q9,25.5 5,28.5Z" fill="url(#ibr)" stroke="#e81414" stroke-width="2" stroke-linejoin="round"/>
</g>
<!-- 7 strip with green -->
<g transform="translate(264,42)">
 <path d="M17.3,6.9 L20.2,2.9 L29.3,2.9 L23.8,15.9 Q17,20 14.5,25.3 L13.7,28.5 Q9,26.5 4.3,28.5 Q4.5,20 6.1,15.5 L10,7Z" fill="url(#ib)" stroke="#0c1828" stroke-width="0.7"/>
 <path d="M6.5,6.5 L23.1,7.6 L23.1,15.5 L6.1,15.5Z" fill="#72c43c" stroke="#1a3a0a" stroke-width="0.4"/>
 <path d="M6.5,6.5 L14,7 L6.3,12Z" fill="#5aa828"/>
 <path d="M6.1,15.2 Q13.7,10.5 23.8,16.6" fill="none" stroke="#e41c1c" stroke-width="1.1"/>
</g>
<!-- 8 pipe with rings -->
<g transform="translate(304,42)">
 <path d="M3.6,24.6 L4.7,15.2 Q8,6 15,4 L27.8,2.2 Q30.5,7 28.9,11.6 Q25,12 22,15 Q19.5,18 18.8,24.9Z" fill="url(#ib)" stroke="#0c1828" stroke-width="0.7"/>
 <ellipse cx="10.8" cy="25.3" rx="7.5" ry="3.7" fill="#3a68aa" stroke="#e41c1c" stroke-width="1.1"/>
 <path d="M4.3,15.5 Q11.9,10 19.5,18.4 M11.6,5.8 Q20.2,2 24.9,13.4 M27.8,2.2 Q31,7 28.9,11.6" fill="none" stroke="#e41c1c" stroke-width="1.1"/>
</g>
<!-- 9 pipe -->
<g transform="translate(344,42)">
 <path d="M4.3,24 L4.3,22.4 Q4.5,14 7.2,10.8 Q11,5.5 15.2,4.7 Q22,3 28.9,2.9 Q30.5,3.5 30,7 L29.6,11.2 Q24,12.5 21.7,14.1 Q18,17 17.7,20.2 L17.7,24.6Z" fill="url(#ib)" stroke="#0c1828" stroke-width="0.7"/>
 <ellipse cx="10.9" cy="25.3" rx="7" ry="3.9" fill="url(#ib)" stroke="#0c1828" stroke-width="0.7"/>
</g>
<!-- 10 red grid -->
<g transform="translate(384,42)">
 <path d="M4,12.6 Q7,7 10.8,4.7 Q13,3 15.9,2.9 Q19,3.5 21.7,5 Q25.5,7 27.8,9.4 Q29.7,12 30.3,15.5 Q25,18.5 22.4,21.7 Q20,25 19.1,28.5 Q17.5,24.5 15.2,21.7 Q12,17.5 8.7,15.5 Q6,13.5 4,12.6Z" fill="url(#ir)" stroke="#400" stroke-width="0.7"/>
 <path d="M10.1,6.1 Q12.5,7 14.1,8.3 Q18,10.5 20.2,13.4 Q22.5,15.5 24.2,18.8 M19.5,4.7 Q16.5,6.5 14.1,8.3 Q11,11.5 9,15.2 M26,10.5 Q22.8,11.5 20.2,13.4 Q17,16.5 15.2,21" fill="none" stroke="#2a0000" stroke-width="0.9"/>
</g>
<!-- 11 blue dome with dashes -->
<g transform="translate(424,42)">
 <path d="M4,15.5 Q6.5,9.5 10.1,6.1 Q13,3.2 16.3,2.9 Q21,3.5 24.6,5.4 Q28.5,10 30,15.5 Q23.5,20 18.4,28.9 Q14,21 4,15.5Z" fill="url(#ib)" stroke="#0c1828" stroke-width="0.8"/>
 <path d="M4.6,5.6 L8.2,6.3 M11.2,7.4 L14.6,9.2 M15,13.2 L17.4,10.6 L20.2,13 M13.3,16.4 L11.4,19.2 M10.2,21.6 L8.4,25.4 M20,9 L23.2,7.2 M25.6,5.8 L29.4,5.2 M22.4,15.6 L24.6,18.8 M25.6,21 L27,25" fill="none" stroke="#e41c1c" stroke-width="1.7" stroke-linecap="round"/>
</g>
<!-- 12 spring -->
<g transform="translate(464,42)" fill="none" stroke="#dcdcdc" stroke-width="1.1">
 <ellipse cx="17" cy="4.6" rx="4.7" ry="1.5"/>
 <path d="M12.3,8.2 Q17,6.8 21.7,8 M12.3,13.4 Q17,12 21.7,13.2 M12.3,18.4 Q17,17 21.7,18.2 M12.3,23.4 Q17,22 21.7,23.2"/>
 <path d="M21.7,4.6 Q23,6.5 21.7,8 Q23,11 21.7,13.2 Q23,16 21.7,18.2 Q23,21 21.7,23.2 Q23,25.5 21.7,27.3" stroke-width="0.9"/>
 <ellipse cx="17" cy="27.3" rx="4.7" ry="1.5"/>
</g>
<!-- 13 yellow sphere -->
<g transform="translate(507,44)">
 <circle cx="13.6" cy="13.7" r="13.4" fill="url(#iy)" stroke="#2a2000" stroke-width="0.8"/>
 <path d="M0.8,8.3 Q10,17 27,17.5" fill="none" stroke="#e41c1c" stroke-width="1.6"/>
</g>
<!-- 14 two boxes -->
<g transform="translate(544,42)">
 <path d="M5.4,8.7 L9.4,2.5 L20.6,4.7 L10.5,10.5Z" fill="#86b2e6"/>
 <path d="M10.5,10.5 L20.6,4.7 L20.6,11.9 L10.5,17.7Z" fill="#3262a8"/>
 <path d="M9.4,2.5 L20.6,4.7 L20.6,12" fill="none" stroke="#d41818" stroke-width="1.3"/>
 <rect x="3.8" y="10" width="5.6" height="7.4" fill="#3262a8" stroke="#d41818" stroke-width="1.3"/>
 <path d="M12.3,18.8 L16.6,11.6 L29.3,13.7 L17.7,20.2Z" fill="#86b2e6"/>
 <path d="M17.7,20.2 L29.3,13.7 L29.3,28.9 L17.7,26.7Z" fill="#3262a8"/>
 <path d="M16.6,11.6 L29.3,13.7 L29.3,28.9" fill="none" stroke="#d41818" stroke-width="1.3"/>
 <rect x="10.8" y="19.8" width="5.6" height="7.6" fill="#3262a8" stroke="#d41818" stroke-width="1.3"/>
</g>
<!-- 15 blend surface -->
<g transform="translate(582,38)">
 <path d="M12.2,33.4 Q5,27 5.9,20.8 Q6,15 7.7,11.7 Q11.5,7.5 17.2,6.8 Q23,6.8 27.1,8.6 Q30.5,10 32,12.2 Q30,20 29.8,28.4 Q26,25 21.7,24.4 Q17,24.4 14.9,26.2 Q13,29 12.2,33.4Z" fill="#6e9ed8" stroke="#0c1828" stroke-width="0.7"/>
 <path d="M16.7,6.8 Q23,6.3 27.1,8.6 Q23.5,15 22.6,23.5 Q18,24 14.9,25.7 Q12.3,21 12.2,17.2 Q13,10 16.7,6.8Z" fill="#7ad634" stroke="#1c3c0c" stroke-width="0.6"/>
 <path d="M7,15 Q19,9 31,13 M6,20 Q19,14 30.5,18 M6.5,25 Q19,19 30,23.5 M8,29 Q11,26 13.5,25" fill="none" stroke="#16304c" stroke-width="0.55"/>
</g>
<!-- 16 bent pipe -->
<g transform="translate(624,42)">
 <path d="M6.9,15.5 Q10,6.5 17.3,4.7 L21,5.1 L23.1,11.2 L20.2,17.3 Q17,18 14.5,20.2 L9,20.2 Z" fill="url(#ig)" stroke="#183808" stroke-width="0.6"/>
 <path d="M9.5,19.5 Q14,13 23.1,11.2" fill="none" stroke="#1c3c0c" stroke-width="0.6"/>
 <path d="M21,5.1 L27.5,5.1 L30,10.8 L23.1,11.2Z" fill="#4a7cc0" stroke="#0c1828" stroke-width="0.6"/>
 <path d="M23.1,11.2 L30,10.8 L27.5,17.7 L20.2,17.3Z" fill="#2e5ea6" stroke="#0c1828" stroke-width="0.6"/>
 <path d="M3.3,22.4 L6.9,17 L9,20.2 L5.5,25Z" fill="#6e9ed8" stroke="#0c1828" stroke-width="0.5"/>
 <path d="M9,20.2 L13.7,21.3 L12.3,25 L5.5,25Z" fill="#2e5ea6" stroke="#0c1828" stroke-width="0.5"/>
</g>
<!-- 17 cone -->
<g transform="translate(664,42)">
 <path d="M5,25 Q6.5,18 11.6,15.9 L21.7,23.5 L21.3,25Z" fill="#68c424"/>
 <path d="M9,11.8 Q9.5,6.5 14.5,5.1 Q19,3 23.5,3.3 Q26.5,9 29.3,15.2 Q27,21 21,21.5 Q14,15 9,11.8Z" fill="url(#ib)" stroke="#0c1828" stroke-width="0.8"/>
 <ellipse cx="25.3" cy="18.8" rx="4.6" ry="3.1" fill="#3f70b6" stroke="#0c1828" stroke-width="0.8" transform="rotate(-28 25.3 18.8)"/>
</g>
<!-- 18 blue D with red -->
<g transform="translate(704,42)">
 <path d="M7.6,3.6 L18.8,3.6 Q25,6.5 26,10.8 Q25,16 20.2,19.5 Q17,21.5 15.2,21.7 L4.3,22.4 Q9,18 9,14.5 Q9.2,8 7.6,3.6Z" fill="url(#ib)" stroke="#d41818" stroke-width="1.5" stroke-linejoin="round"/>
 <path d="M8.3,4.5 Q16,7 17.5,11 Q18.8,15 18.8,20.2" fill="none" stroke="#d41818" stroke-width="1.4"/>
 <circle cx="7.2" cy="4" r="1.8" fill="#72d82a"/>
 <path d="M23.5,21.5 L30.3,18.8 L30.3,25 L24,25 L25.8,23Z" fill="#72d82a"/>
</g>
<!-- 19 zebra -->
<use href="#zebra" x="748" y="44.5"/>
<!-- 20 red cube -->
<g transform="translate(784,42)">
 <path d="M5,7.2 L17.3,4.7 L28.9,7.2 L17.3,10.5Z" fill="#2e5ea6" stroke="#0c1828" stroke-width="0.6"/>
 <ellipse cx="17.3" cy="7.6" rx="4.3" ry="1.3" fill="#7ad634"/>
 <path d="M5,7.2 L17.3,10.5 L17.3,25 L5,23.5Z" fill="url(#irv)" stroke="#0c1828" stroke-width="0.6"/>
 <path d="M17.3,10.5 L28.9,7.2 L28.9,22.4 L17.3,25Z" fill="url(#ir)" stroke="#0c1828" stroke-width="0.6"/>
</g>
<!-- 21 blocks -->
<g transform="translate(824,42)">
 <path d="M3.6,12.2 L9.5,9 L14.8,6.5 L17.7,2.5 L23.8,4.7 L23.8,11.2 L30.3,13.6 L30.3,19.7 L23.5,23.5 L21,25 L3.6,25Z" fill="#5a8cd0" stroke="#0c1828" stroke-width="0.7"/>
 <path d="M3.6,12.2 L9.5,9 L15.4,11.8 L9.5,14.5Z" fill="#86b2e6" stroke="#0c1828" stroke-width="0.5"/>
 <path d="M14,5.5 L17.7,2.5 L23.8,4.7 L19.6,7.5Z" fill="#86b2e6" stroke="#0c1828" stroke-width="0.5"/>
 <path d="M11,8 L14,5.5 L19.6,7.5 L16.5,9.5Z" fill="#8ae83a" stroke="#0c1828" stroke-width="0.5"/>
 <path d="M16.5,9.5 L19.6,7.5 L19.6,14 L16.5,16Z" fill="#5cb01c"/>
 <path d="M21,13.5 L24.5,11.8 L30.3,13.6 L26.5,15.5Z" fill="#86b2e6" stroke="#0c1828" stroke-width="0.5"/>
 <path d="M17.2,16 L21,13.5 L26.5,15.5 L23.5,17.8Z" fill="#8ae83a" stroke="#0c1828" stroke-width="0.5"/>
 <path d="M23,17.8 L25.5,16.5 L25.5,23.5 L23,25Z" fill="#5cb01c"/>
 <path d="M10.5,20.5 L15.6,17.8 L21,20 L16.2,22.5Z" fill="#86b2e6" stroke="#0c1828" stroke-width="0.5"/>
 <path d="M4.5,13.5 L9.3,15 L9.3,20.5 L16,24 L4.5,24Z" fill="#7eaae0"/>
</g>
<!-- 22 striped sphere -->
<g transform="translate(864,42)">
 <circle cx="17" cy="14.3" r="13.5" fill="url(#iy)" stroke="#2a2000" stroke-width="0.8"/>
 <g fill="none" stroke="#e41c1c" stroke-width="1.8">
  <path d="M12.3,3.4 Q17,9 28,9.5"/>
  <path d="M7.2,7 Q14,13.5 30,14.3"/>
  <path d="M4,11 Q12,18.5 30.2,19"/>
  <path d="M3.3,16 Q11,22.5 29.8,23"/>
  <path d="M4.3,20.5 Q12,26 28,25"/>
  <path d="M6,25 Q8,26 9,26"/>
 </g>
</g>
<!-- 23 info -->
<g transform="translate(920,43.3)">
 <circle cx="16.6" cy="14.6" r="12.6" fill="url(#iinfo)" stroke="#d8ecff" stroke-width="0.9"/>
 <path d="M18,10.8 L29,19 L29,24 L18,24Z" fill="#1a80dc" opacity="0.35"/>
 <rect x="15.2" y="8" width="2.8" height="2.8" fill="#e0eeff"/>
 <rect x="15.2" y="13.4" width="2.8" height="10.4" fill="#c8e2fa"/>
</g>
<!-- 24 blue/green cube -->
<g transform="translate(960,42)">
 <path d="M3.3,6.5 L15.5,3.6 L27.5,6.9 L15.5,9.4Z" fill="#7eaee4" stroke="#0c1828" stroke-width="0.8"/>
 <path d="M3.3,6.5 L15.5,9.4 L15.5,25 L3.3,23.1Z" fill="url(#ibv)" stroke="#0c1828" stroke-width="0.8"/>
 <path d="M15.5,9.4 L19.5,8.5 L19.5,25 L15.5,25Z" fill="#2e5ea6"/>
 <path d="M19.5,10.5 L30.3,7.6 L30.3,22.8 L19.5,25Z" fill="url(#ig)" stroke="#0c2808" stroke-width="0.6"/>
</g>
<!-- 25 green cube -->
<g transform="translate(1000,42)">
 <path d="M4.8,6.5 L16.3,4 L28.8,6.5 L16.3,9.3Z" fill="#86e838" stroke="#0c2808" stroke-width="0.8"/>
 <path d="M4.8,6.5 L16.3,9.3 L16.3,25 L4.8,23Z" fill="#7cdc30" stroke="#0c2808" stroke-width="0.8"/>
 <path d="M16.3,9.3 L28.8,6.5 L28.8,22.5 L16.3,25Z" fill="url(#ig)" stroke="#0c2808" stroke-width="0.8"/>
</g>
<!-- 26 clipboard -->
<g transform="translate(1040,42)">
 <rect x="7.2" y="5.4" width="19.6" height="23.2" fill="#a4a4a4" stroke="#c6c6c6" stroke-width="0.9"/>
 <path d="M12.3,8.3 Q12.5,5 15,4.5 Q16.5,2.8 18,3.5 Q19.5,4.5 19.5,5.5 Q21,6 21,8.3Z" fill="#d4d4d4" stroke="#8a8a8a" stroke-width="0.4"/>
 <path d="M22.6,11.2 Q19,9.8 16,10.3 Q11,11.2 11.5,14.5 Q12.2,17 17,18.5 Q23,20.3 22.8,23.5 Q22,26.8 16,26.6 Q13,26.5 11,25.5" fill="none" stroke="#555" stroke-width="1.6"/>
</g>
</svg>
<div id="tip">
<div class="b" style="top:6px">BlendSurface</div>
<div style="top:36px;letter-spacing:0.46px">Create a surface between two edges with some continuity with</div>
<div style="top:56px;letter-spacing:0.48px">their support faces</div>
<div class="b" style="top:96px">Usage :</div>
<div style="top:116px;letter-spacing:0.33px">You must select 4 subshapes in the 3D View :</div>
<div style="top:136px;letter-spacing:-0.22px">- EDGE1 on FACE1</div>
<div style="top:156px;letter-spacing:-0.22px">- EDGE2 on FACE2</div>
<div style="top:186px;font-style:italic;letter-spacing:0.18px">Curves_BlendSurf2</div>
</div>
</body></html>
